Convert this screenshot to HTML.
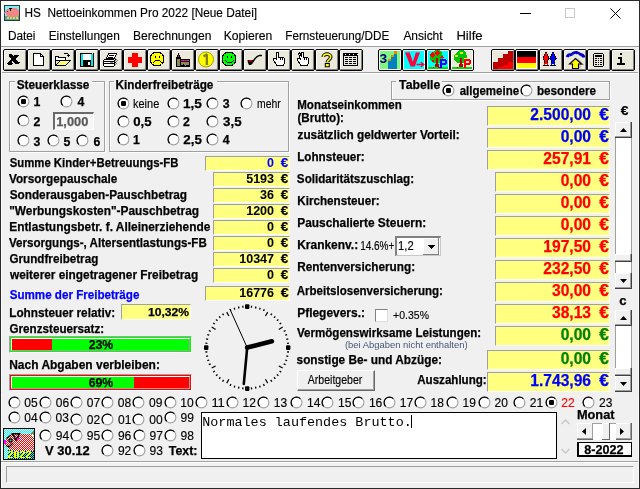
<!DOCTYPE html><html><head><meta charset="utf-8"><style>
html,body{margin:0;padding:0;}
body{width:640px;height:489px;position:relative;overflow:hidden;background:#f0f0f0;font-family:"Liberation Sans",sans-serif;}
.t{position:absolute;white-space:nowrap;}
svg{display:block}
</style></head><body>
<div style="position:absolute;left:0px;top:0px;width:640px;height:46px;background:#fff"></div>
<div style="position:absolute;left:0px;top:46px;width:640px;height:1px;background:#a0a0a0"></div>
<div style="position:absolute;left:0px;top:0px;width:640px;height:1px;background:#2a2a2a"></div>
<div style="position:absolute;left:0px;top:0px;width:1px;height:489px;background:#2a2a2a"></div>
<div style="position:absolute;left:639px;top:0px;width:1px;height:489px;background:#2a2a2a"></div>
<div style="position:absolute;left:0px;top:488px;width:640px;height:1px;background:#2a2a2a"></div>
<svg style="position:absolute;left:4px;top:5px" width="16" height="16" viewBox="0 0 16 16" shape-rendering="crispEdges">
<rect x="0" y="0" width="16" height="16" fill="#1a4040"/><rect x="1" y="1" width="14" height="14" fill="#80f0f0"/>
<rect x="1" y="11" width="14" height="4" fill="#60a0a0"/>
<path d="M1 6 L3 4 L6 3 H12 L15 5 V10 L13 12 H5 L2 10 Z" fill="#f08888"/>
<rect x="5" y="3" width="3" height="1" fill="#000"/><rect x="6" y="4" width="1" height="2" fill="#000"/>
<rect x="3" y="6" width="1" height="1" fill="#206060"/>
<rect x="0" y="7" width="1" height="2" fill="#c040c0"/>
<rect x="3" y="12" width="2" height="2" fill="#e0e040"/><rect x="6" y="12" width="2" height="2" fill="#e0e040"/><rect x="9" y="12" width="2" height="2" fill="#e0e040"/><rect x="12" y="12" width="2" height="2" fill="#e0e040"/>
</svg>
<div style="position:absolute;left:520px;top:13px;width:11px;height:1px;background:#000"></div>
<div style="position:absolute;left:565px;top:8px;width:10px;height:10px;border:1px solid #c8c8c8;box-sizing:border-box"></div>
<svg style="position:absolute;left:610px;top:8px" width="11" height="11" viewBox="0 0 11 11"><path d="M0.5 0.5 L10.5 10.5 M10.5 0.5 L0.5 10.5" stroke="#000" stroke-width="1"/></svg>
<div style="position:absolute;left:1px;top:72px;width:638px;height:1px;background:#a0a0a0"></div>
<div style="position:absolute;left:1px;top:73px;width:638px;height:1px;background:#fff"></div>
<div style="position:absolute;left:1px;top:47px;width:1px;height:441px;background:#fff"></div>
<div style="position:absolute;left:638px;top:47px;width:1px;height:441px;background:#fafafa"></div>
<div style="position:absolute;left:3px;top:49px;width:24px;height:22px;box-sizing:border-box;border:1px solid #000;border-radius:2px;background:#ebe9dc;box-shadow:inset 1px 1px 0 #fff, inset -1px -1px 0 #808080;"><svg width="21" height="20" viewBox="0 0 21 20" shape-rendering="crispEdges"><rect x="5" y="4" width="3" height="1" fill="#000"/><rect x="5" y="5" width="4" height="1" fill="#000"/><rect x="10" y="5" width="5" height="1" fill="#000"/><rect x="5" y="6" width="9" height="1" fill="#000"/><rect x="6" y="7" width="7" height="1" fill="#000"/><rect x="7" y="8" width="5" height="1" fill="#000"/><rect x="7" y="9" width="5" height="1" fill="#000"/><rect x="6" y="10" width="7" height="1" fill="#000"/><rect x="5" y="11" width="3" height="1" fill="#000"/><rect x="9" y="11" width="5" height="1" fill="#000"/><rect x="4" y="12" width="4" height="1" fill="#000"/><rect x="10" y="12" width="6" height="1" fill="#000"/><rect x="3" y="13" width="6" height="1" fill="#000"/><rect x="11" y="13" width="4" height="1" fill="#000"/><rect x="4" y="14" width="4" height="1" fill="#000"/></svg></div>
<div style="position:absolute;left:27px;top:49px;width:24px;height:22px;box-sizing:border-box;border:1px solid #000;border-radius:2px;background:#ebe9dc;box-shadow:inset 1px 1px 0 #fff, inset -1px -1px 0 #808080;"><svg width="21" height="20" viewBox="0 0 21 20" shape-rendering="crispEdges"><path d="M5.5 3.5 H12.5 L15.5 6.5 V15.5 H5.5 Z" fill="#fff" stroke="#000"/><path d="M12.5 3.5 V6.5 H15.5" fill="none" stroke="#000"/></svg></div>
<div style="position:absolute;left:51px;top:49px;width:24px;height:22px;box-sizing:border-box;border:1px solid #000;border-radius:2px;background:#ebe9dc;box-shadow:inset 1px 1px 0 #fff, inset -1px -1px 0 #808080;"><svg width="21" height="20" viewBox="0 0 21 20" shape-rendering="crispEdges"><path d="M3.5 15.5 V6.5 H6.5 V7.5 H13.5 V10.5 H3.5" fill="#fff" stroke="#000"/><path d="M3.5 15.5 L8.5 10.5 H18.5 L13.5 15.5 Z" fill="#ffff70" stroke="#000"/><path d="M11.5 4.5 L12.5 3.5 H15.5 L16.5 4.5 V6.5" fill="none" stroke="#000"/><rect x="15" y="5" width="3" height="1" fill="#000"/><rect x="16" y="6" width="1" height="1" fill="#000"/></svg></div>
<div style="position:absolute;left:75px;top:49px;width:24px;height:22px;box-sizing:border-box;border:1px solid #000;border-radius:2px;background:#ebe9dc;box-shadow:inset 1px 1px 0 #fff, inset -1px -1px 0 #808080;"><svg width="21" height="20" viewBox="0 0 21 20" shape-rendering="crispEdges"><rect x="4" y="3" width="14" height="14" fill="#000"/><rect x="5" y="4" width="2" height="12" fill="#00e8e8"/><rect x="15" y="4" width="2" height="12" fill="#00e8e8"/><rect x="7" y="4" width="8" height="6" fill="#fff"/><rect x="16" y="3" width="1" height="1" fill="#fff"/><rect x="12" y="12" width="2" height="3" fill="#fff"/></svg></div>
<div style="position:absolute;left:99px;top:49px;width:24px;height:22px;box-sizing:border-box;border:1px solid #000;border-radius:2px;background:#ebe9dc;box-shadow:inset 1px 1px 0 #fff, inset -1px -1px 0 #808080;"><svg width="21" height="20" viewBox="0 0 21 20" shape-rendering="crispEdges"><path d="M8.5 3.5 H16.5 L14.5 8.5 H6.5 Z" fill="#fff" stroke="#000"/><rect x="9" y="5" width="5" height="1" fill="#000"/><rect x="8" y="7" width="5" height="1" fill="#000"/><path d="M4.5 9.5 H13.5 L14.5 10.5 V15.5 L13.5 16.5 H4.5 L3.5 15.5 V10.5 Z" fill="#fff" stroke="#000"/><rect x="4" y="11" width="10" height="1" fill="#000"/><rect x="4" y="13" width="10" height="1" fill="#000"/><rect x="10" y="12" width="3" height="1" fill="#888"/><rect x="15" y="8" width="1" height="1" fill="#777"/><rect x="16" y="9" width="1" height="1" fill="#777"/><rect x="15" y="10" width="1" height="1" fill="#777"/><rect x="17" y="10" width="1" height="1" fill="#777"/><rect x="16" y="11" width="1" height="1" fill="#777"/><rect x="16" y="13" width="1" height="1" fill="#777"/><rect x="15" y="14" width="1" height="1" fill="#777"/><rect x="15" y="9" width="1" height="1" fill="#000"/><rect x="15" y="12" width="1" height="1" fill="#000"/></svg></div>
<div style="position:absolute;left:123px;top:49px;width:24px;height:22px;box-sizing:border-box;border:1px solid #000;border-radius:2px;background:#ebe9dc;box-shadow:inset 1px 1px 0 #fff, inset -1px -1px 0 #808080;"><svg width="21" height="20" viewBox="0 0 21 20" shape-rendering="crispEdges"><rect x="8" y="3" width="6" height="14" fill="#f00"/><rect x="4" y="7" width="14" height="6" fill="#f00"/></svg></div>
<div style="position:absolute;left:147px;top:49px;width:24px;height:22px;box-sizing:border-box;border:1px solid #000;border-radius:2px;background:#ebe9dc;box-shadow:inset 1px 1px 0 #fff, inset -1px -1px 0 #808080;"><svg width="21" height="20" viewBox="0 0 21 20" shape-rendering="crispEdges"><path d="M6.5 2.5 H11.5 L13.5 3.5 L14.5 4.5 L15.5 6.5 V11.5 L14.5 13.5 L13.5 14.5 L11.5 15.5 H6.5 L4.5 14.5 L3.5 13.5 L2.5 11.5 V6.5 L3.5 4.5 L4.5 3.5 Z" fill="#ff0" stroke="#000"/><rect x="7" y="6" width="1" height="2" fill="#000"/><rect x="11" y="6" width="1" height="2" fill="#000"/><rect x="7" y="10" width="5" height="1" fill="#000"/><rect x="6" y="11" width="1" height="1" fill="#000"/><rect x="12" y="11" width="1" height="1" fill="#000"/><rect x="5" y="12" width="1" height="1" fill="#000"/><rect x="13" y="12" width="1" height="1" fill="#000"/></svg></div>
<div style="position:absolute;left:171px;top:49px;width:24px;height:22px;box-sizing:border-box;border:1px solid #000;border-radius:2px;background:#ebe9dc;box-shadow:inset 1px 1px 0 #fff, inset -1px -1px 0 #808080;"><svg width="21" height="20" viewBox="0 0 21 20" shape-rendering="crispEdges"><rect x="6" y="3" width="1" height="2" fill="#000"/><rect x="5" y="5" width="3" height="3" fill="#000"/><rect x="6" y="5" width="1" height="1" fill="#f00"/><rect x="6" y="6" width="1" height="2" fill="#f0f"/><rect x="4" y="7" width="5" height="10" fill="#000"/><rect x="5" y="9" width="3" height="7" fill="#8a8a50"/><rect x="8" y="9" width="10" height="8" fill="#000"/><rect x="9" y="10" width="8" height="1" fill="#f0f"/><rect x="9" y="10" width="1" height="1" fill="#f00"/><rect x="12" y="10" width="1" height="1" fill="#f00"/><rect x="14" y="10" width="1" height="1" fill="#f00"/><rect x="9" y="12" width="8" height="3" fill="#8a8a50"/><rect x="11" y="14" width="1" height="2" fill="#000"/><rect x="13" y="15" width="1" height="1" fill="#8a8a50"/></svg></div>
<div style="position:absolute;left:195px;top:49px;width:24px;height:22px;box-sizing:border-box;border:1px solid #000;border-radius:2px;background:#ebe9dc;box-shadow:inset 1px 1px 0 #fff, inset -1px -1px 0 #808080;"><svg width="21" height="20" viewBox="0 0 21 20"><circle cx="10" cy="9.5" r="7.5" fill="#ff0" stroke="#a0a000"/><path d="M7.5 6.5 L10.8 4.3 V15" fill="none" stroke="#808000" stroke-width="2.3" stroke-linejoin="bevel"/></svg></div>
<div style="position:absolute;left:219px;top:49px;width:24px;height:22px;box-sizing:border-box;border:1px solid #000;border-radius:2px;background:#ebe9dc;box-shadow:inset 1px 1px 0 #fff, inset -1px -1px 0 #808080;"><svg width="21" height="20" viewBox="0 0 21 20" shape-rendering="crispEdges"><path d="M6.5 2.5 H11.5 L13.5 3.5 L14.5 4.5 L15.5 6.5 V11.5 L14.5 13.5 L13.5 14.5 L11.5 15.5 H6.5 L4.5 14.5 L3.5 13.5 L2.5 11.5 V6.5 L3.5 4.5 L4.5 3.5 Z" fill="#0f0" stroke="#000"/><rect x="7" y="6" width="1" height="2" fill="#000"/><rect x="11" y="6" width="1" height="2" fill="#000"/><rect x="5" y="10" width="1" height="1" fill="#000"/><rect x="13" y="10" width="1" height="1" fill="#000"/><rect x="6" y="11" width="1" height="1" fill="#000"/><rect x="12" y="11" width="1" height="1" fill="#000"/><rect x="7" y="12" width="5" height="1" fill="#000"/></svg></div>
<div style="position:absolute;left:243px;top:49px;width:24px;height:22px;box-sizing:border-box;border:1px solid #000;border-radius:2px;background:#ebe9dc;box-shadow:inset 1px 1px 0 #fff, inset -1px -1px 0 #808080;"><svg width="21" height="20" viewBox="0 0 21 20"><path d="M3.5 10 H9 L8.5 13.5 L7 15 H5 L4 13 Z" fill="#000"/><rect x="5" y="10.3" width="3" height="1.3" fill="#f00"/><path d="M8.5 12.5 Q12 6 15.5 5.5 H18" fill="none" stroke="#000" stroke-width="1.4"/></svg></div>
<div style="position:absolute;left:267px;top:49px;width:24px;height:22px;box-sizing:border-box;border:1px solid #000;border-radius:2px;background:#ebe9dc;box-shadow:inset 1px 1px 0 #fff, inset -1px -1px 0 #808080;"><svg width="21" height="20" viewBox="0 0 21 20" shape-rendering="crispEdges"><path d="M8.5 9.5 V2.5 H10.5 V7.5 H15.5 L16.5 8.5 V13.5 L15.5 14.5 V15.5 H8.5 V14.5 L5.5 10.5 V8.5 H7.5 Z" fill="#fff" stroke="#000"/><rect x="12" y="8" width="1" height="2" fill="#000"/><rect x="14" y="8" width="1" height="2" fill="#000"/></svg></div>
<div style="position:absolute;left:291px;top:49px;width:24px;height:22px;box-sizing:border-box;border:1px solid #000;border-radius:2px;background:#ebe9dc;box-shadow:inset 1px 1px 0 #fff, inset -1px -1px 0 #808080;"><svg width="21" height="20" viewBox="0 0 21 20" shape-rendering="crispEdges"><path d="M8.5 9.5 L6.5 3.5 L7.5 2.5 L9.5 6.5 V2.5 H11.5 V7.5 H15.5 L16.5 8.5 V13.5 L15.5 14.5 V15.5 H8.5 V14.5 L5.5 10.5 V8.5 H7.5 Z" fill="#fff" stroke="#000"/><rect x="12" y="8" width="1" height="2" fill="#000"/><rect x="14" y="8" width="1" height="2" fill="#000"/></svg></div>
<div style="position:absolute;left:315px;top:49px;width:24px;height:22px;box-sizing:border-box;border:1px solid #000;border-radius:2px;background:#ebe9dc;box-shadow:inset 1px 1px 0 #fff, inset -1px -1px 0 #808080;"><svg width="21" height="20" viewBox="0 0 21 20"><g transform="translate(1.5,0)"><path d="M5.8 7 C5.8 3.2 13.2 3.2 13.2 7 C13.2 9.8 9.8 9.8 9.8 12.3" fill="none" stroke="#000" stroke-width="3.6"/><path d="M5.8 7 C5.8 3.2 13.2 3.2 13.2 7 C13.2 9.8 9.8 9.8 9.8 12.3" fill="none" stroke="#ff0" stroke-width="1.6"/><rect x="7.8" y="13.5" width="4" height="3.3" fill="#ff0" stroke="#000"/></g></svg></div>
<div style="position:absolute;left:339px;top:49px;width:24px;height:22px;box-sizing:border-box;border:1px solid #000;border-radius:2px;background:#ebe9dc;box-shadow:inset 1px 1px 0 #fff, inset -1px -1px 0 #808080;"><svg width="21" height="20" viewBox="0 0 21 20" shape-rendering="crispEdges"><rect x="3" y="3" width="15" height="13" fill="#000"/><rect x="4" y="6" width="13" height="9" fill="#ebe9dc"/><rect x="5" y="7" width="3" height="1" fill="#000"/><rect x="5" y="9" width="3" height="1" fill="#000"/><rect x="5" y="11" width="3" height="1" fill="#000"/><rect x="5" y="13" width="3" height="1" fill="#000"/><rect x="9" y="7" width="3" height="1" fill="#000"/><rect x="9" y="9" width="3" height="1" fill="#000"/><rect x="9" y="11" width="3" height="1" fill="#000"/><rect x="9" y="13" width="3" height="1" fill="#000"/><rect x="13" y="7" width="3" height="1" fill="#000"/><rect x="13" y="9" width="3" height="1" fill="#000"/><rect x="13" y="11" width="3" height="1" fill="#000"/><rect x="13" y="13" width="3" height="1" fill="#000"/><rect x="5" y="4" width="1" height="1" fill="#fff"/><rect x="9" y="4" width="1" height="1" fill="#fff"/><rect x="13" y="4" width="1" height="1" fill="#fff"/><rect x="17" y="4" width="1" height="1" fill="#fff"/></svg></div>
<div style="position:absolute;left:378px;top:49px;width:24px;height:22px;box-sizing:border-box;border:1px solid #000;border-radius:2px;background:#ebe9dc;box-shadow:inset 1px 1px 0 #fff, inset -1px -1px 0 #fff;overflow:hidden"><div style="position:absolute;left:1px;top:1px;width:20px;height:18px;background:#80f880"></div><div style="position:absolute;left:0;top:0"><svg width="22" height="20" viewBox="0 0 22 20" shape-rendering="crispEdges"><text x="0.6" y="12.8" font-family="Liberation Sans" font-weight="bold" font-size="13.5" fill="#000080" shape-rendering="auto">3</text><rect x="9" y="11" width="3" height="8" fill="#0080c0"/><rect x="12" y="7" width="3" height="12" fill="#0080c0"/><rect x="15" y="4" width="3" height="15" fill="#0080c0"/><rect x="9" y="9" width="3" height="2" fill="#ff8000"/><rect x="12" y="5" width="3" height="2" fill="#ff8000"/><rect x="15" y="1" width="3" height="3" fill="#ff8000"/></svg></div></div>
<div style="position:absolute;left:402px;top:49px;width:24px;height:22px;box-sizing:border-box;border:1px solid #000;border-radius:2px;background:#ebe9dc;box-shadow:inset 1px 1px 0 #fff, inset -1px -1px 0 #fff;overflow:hidden"><div style="position:absolute;left:1px;top:1px;width:20px;height:18px;background:#00ffff"></div><div style="position:absolute;left:0;top:0"><svg width="22" height="20" viewBox="0 0 22 20"><path d="M2 2.5 H6.8 L9.8 12 L12.8 2.5 H17 L11.8 16.6 H7.6 Z" fill="#ff0040"/><path d="M13.5 14.5 H20.5 M17.8 12.3 L20.8 14.5 L17.8 16.8" fill="none" stroke="#ff0040" stroke-width="1.4"/></svg></div></div>
<div style="position:absolute;left:426px;top:49px;width:24px;height:22px;box-sizing:border-box;border:1px solid #000;border-radius:2px;background:#ebe9dc;box-shadow:inset 1px 1px 0 #fff, inset -1px -1px 0 #fff;overflow:hidden"><div style="position:absolute;left:1px;top:1px;width:20px;height:18px;background:#00ffff"></div><div style="position:absolute;left:0;top:0"><svg width="22" height="20" viewBox="0 0 22 20" shape-rendering="crispEdges"><rect x="1" y="17" width="20" height="2" fill="#00e000"/><path d="M3 6 L6 2 L9 0 H12 L15 3 L16 6 V10 L14 13 H6 L3 10 Z" fill="#00c800"/><path d="M2 5 L5 2 L8 5 L5 8 Z" fill="#f00"/><path d="M7 3 L10 0 L13 3 L10 6 Z" fill="#f00"/><path d="M13 8 L15 5 L17 8 Z" fill="#f00"/><rect x="5" y="10" width="2" height="2" fill="#f00"/><rect x="9" y="8" width="2" height="9" fill="#c00000"/><rect x="8" y="14" width="4" height="3" fill="#c00000"/><rect x="6" y="17" width="1" height="1" fill="#c00000"/><rect x="11" y="17" width="2" height="1" fill="#c00000"/><rect x="13" y="9" width="2" height="9" fill="#0000ff"/><rect x="13" y="9" width="6" height="2" fill="#0000ff"/><rect x="18" y="10" width="2" height="4" fill="#0000ff"/><rect x="13" y="13" width="6" height="2" fill="#0000ff"/></svg></div></div>
<div style="position:absolute;left:450px;top:49px;width:24px;height:22px;box-sizing:border-box;border:1px solid #000;border-radius:2px;background:#ebe9dc;box-shadow:inset 1px 1px 0 #fff, inset -1px -1px 0 #fff;overflow:hidden"><div style="position:absolute;left:1px;top:1px;width:20px;height:18px;background:#ebe9dc"></div><div style="position:absolute;left:0;top:0"><svg width="22" height="20" viewBox="0 0 22 20" shape-rendering="crispEdges"><rect x="1" y="17" width="20" height="2" fill="#00e000"/><path d="M3 6 L6 2 L9 0 H12 L15 3 L16 6 V10 L14 13 H6 L3 10 Z" fill="#00c800"/><rect x="4" y="5" width="3" height="2" fill="#ff0"/><rect x="9" y="2" width="3" height="2" fill="#ff0"/><rect x="13" y="8" width="3" height="2" fill="#ff0"/><rect x="9" y="8" width="2" height="9" fill="#c00000"/><rect x="8" y="14" width="4" height="3" fill="#c00000"/><rect x="6" y="17" width="1" height="1" fill="#c00000"/><rect x="13" y="9" width="2" height="9" fill="#ff0000"/><rect x="13" y="9" width="6" height="2" fill="#ff0000"/><rect x="18" y="10" width="2" height="4" fill="#ff0000"/><rect x="13" y="13" width="6" height="2" fill="#ff0000"/></svg></div></div>
<div style="position:absolute;left:491px;top:49px;width:24px;height:22px;box-sizing:border-box;border:1px solid #000;border-radius:2px;background:#ebe9dc;box-shadow:inset 1px 1px 0 #fff, inset -1px -1px 0 #808080;overflow:hidden"><div style="position:absolute;left:1px;top:1px;width:20px;height:18px;background:#ebe9dc"></div><div style="position:absolute;left:0;top:0"><svg width="22" height="20" viewBox="0 0 22 20" shape-rendering="crispEdges"><path d="M1 19 V12 H6 V8 H11 V4 H16 V1 H21 V19 Z" fill="#c00000"/><path d="M6 19 V17 H11 V15 H16 V12 H21 V19 Z" fill="#ff0000"/></svg></div></div>
<div style="position:absolute;left:515px;top:49px;width:24px;height:22px;box-sizing:border-box;border:1px solid #000;border-radius:2px;background:#ebe9dc;box-shadow:inset 1px 1px 0 #fff, inset -1px -1px 0 #808080;overflow:hidden"><div style="position:absolute;left:1px;top:1px;width:20px;height:18px;background:#ffffff"></div><div style="position:absolute;left:0;top:0"><svg width="22" height="20" viewBox="0 0 22 20" shape-rendering="crispEdges"><rect x="1" y="1" width="19" height="6" fill="#000"/><rect x="1" y="7" width="19" height="6" fill="#f00"/><rect x="1" y="13" width="19" height="5" fill="#ff0"/></svg></div></div>
<div style="position:absolute;left:539px;top:49px;width:24px;height:22px;box-sizing:border-box;border:1px solid #000;border-radius:2px;background:#ebe9dc;box-shadow:inset 1px 1px 0 #fff, inset -1px -1px 0 #808080;overflow:hidden"><div style="position:absolute;left:1px;top:1px;width:20px;height:18px;background:#ebe9dc"></div><div style="position:absolute;left:0;top:0"><svg width="22" height="20" viewBox="0 0 22 20" shape-rendering="crispEdges"><rect x="5" y="3" width="2" height="1" fill="#f00"/><rect x="5" y="2" width="2" height="1" fill="#000"/><rect x="4" y="4" width="4" height="1" fill="#000"/><rect x="5" y="4" width="2" height="1" fill="#f00"/><rect x="5" y="5" width="2" height="1" fill="#f00"/><rect x="4" y="5" width="1" height="1" fill="#000"/><rect x="7" y="5" width="1" height="1" fill="#000"/><rect x="3" y="6" width="6" height="4" fill="#000"/><rect x="4" y="6" width="4" height="4" fill="#f00"/><rect x="3" y="8" width="1" height="1" fill="#f00"/><rect x="4" y="10" width="4" height="4" fill="#000"/><rect x="5" y="10" width="2" height="4" fill="#f00"/><rect x="4" y="13" width="1" height="2" fill="#f00"/><rect x="7" y="13" width="1" height="2" fill="#f00"/><rect x="3" y="15" width="6" height="1" fill="#000"/><rect x="12" y="3" width="2" height="1" fill="#00f"/><rect x="12" y="2" width="2" height="1" fill="#000"/><rect x="11" y="4" width="4" height="1" fill="#000"/><rect x="12" y="4" width="2" height="1" fill="#00f"/><rect x="12" y="5" width="2" height="1" fill="#00f"/><rect x="11" y="5" width="1" height="1" fill="#000"/><rect x="14" y="5" width="1" height="1" fill="#000"/><rect x="10" y="6" width="6" height="4" fill="#000"/><rect x="11" y="6" width="4" height="4" fill="#00f"/><rect x="10" y="8" width="1" height="1" fill="#00f"/><rect x="11" y="10" width="4" height="4" fill="#000"/><rect x="12" y="10" width="2" height="4" fill="#00f"/><rect x="11" y="13" width="1" height="2" fill="#00f"/><rect x="14" y="13" width="1" height="2" fill="#00f"/><rect x="10" y="15" width="6" height="1" fill="#000"/><rect x="9" y="8" width="2" height="1" fill="#00f"/><rect x="16" y="8" width="1" height="1" fill="#00f"/></svg></div></div>
<div style="position:absolute;left:563px;top:49px;width:24px;height:22px;box-sizing:border-box;border:1px solid #000;border-radius:2px;background:#ebe9dc;box-shadow:inset 1px 1px 0 #fff, inset -1px -1px 0 #808080;overflow:hidden"><div style="position:absolute;left:1px;top:1px;width:20px;height:18px;background:#ebe9dc"></div><div style="position:absolute;left:0;top:0"><svg width="22" height="20" viewBox="0 0 22 20"><path d="M3 7 Q4 4.5 7.5 4.5 Q9.5 2 13 2.5 Q15 3 16.5 4.5 Q19.5 5 20 7.5" fill="none" stroke="#0000c8" stroke-width="2.8"/><path d="M5 6 Q8 4.5 10 4 M12 4.5 Q15 4 17 6" fill="none" stroke="#8080ff" stroke-width="0.8" stroke-dasharray="1 1.5"/><path d="M13.5 9 L19.5 14.5 H16 V18" fill="none" stroke="#999" stroke-width="1"/><path d="M11.5 8.5 L17.5 14 H14.5 V18.5 H8.5 V14 H5.5 Z" fill="#ff0" stroke="#000" stroke-width="1.1"/></svg></div></div>
<div style="position:absolute;left:587px;top:49px;width:24px;height:22px;box-sizing:border-box;border:1px solid #000;border-radius:2px;background:#ebe9dc;box-shadow:inset 1px 1px 0 #fff, inset -1px -1px 0 #808080;overflow:hidden"><div style="position:absolute;left:1px;top:1px;width:20px;height:18px;background:#ebe9dc"></div><div style="position:absolute;left:0;top:0"><svg width="22" height="20" viewBox="0 0 22 20" shape-rendering="crispEdges"><path d="M6.5 3.5 H14.5 L15.5 4.5 V15.5 L14.5 16.5 H6.5 L5.5 15.5 V4.5 Z" fill="#ebe9dc" stroke="#000"/><rect x="7" y="5" width="7" height="2" fill="#000"/><rect x="7" y="8" width="7" height="1" fill="#000"/><rect x="9" y="8" width="1" height="1" fill="#ebe9dc"/><rect x="11" y="8" width="1" height="1" fill="#ebe9dc"/><rect x="7" y="10" width="7" height="1" fill="#000"/><rect x="9" y="10" width="1" height="1" fill="#ebe9dc"/><rect x="11" y="10" width="1" height="1" fill="#ebe9dc"/><rect x="7" y="12" width="7" height="1" fill="#000"/><rect x="9" y="12" width="1" height="1" fill="#ebe9dc"/><rect x="11" y="12" width="1" height="1" fill="#ebe9dc"/><rect x="7" y="14" width="7" height="1" fill="#000"/><rect x="9" y="14" width="1" height="1" fill="#ebe9dc"/><rect x="11" y="14" width="1" height="1" fill="#ebe9dc"/></svg></div></div>
<div style="position:absolute;left:611px;top:49px;width:24px;height:22px;box-sizing:border-box;border:1px solid #000;border-radius:2px;background:#ebe9dc;box-shadow:inset 1px 1px 0 #fff, inset -1px -1px 0 #808080;overflow:hidden"><div style="position:absolute;left:1px;top:1px;width:20px;height:18px;background:#ebe9dc"></div><div style="position:absolute;left:0;top:0"><svg width="22" height="20" viewBox="0 0 22 20" shape-rendering="crispEdges"><rect x="8" y="3" width="2" height="2" fill="#000"/><rect x="6" y="7" width="4" height="2" fill="#000"/><rect x="8" y="7" width="2" height="7" fill="#000"/><rect x="5" y="13" width="8" height="2" fill="#000"/></svg></div></div>
<div style="position:absolute;left:10px;top:82px;width:95px;height:70px;border:1px solid #fff;box-sizing:border-box;width:96px;height:71px"></div>
<div style="position:absolute;left:9px;top:81px;width:95px;height:70px;border:1px solid #a0a0a0;box-sizing:border-box;width:96px;height:71px"></div>
<div style="position:absolute;left:15px;top:80px;width:77px;height:4px;background:#f0f0f0"></div>
<svg style="position:absolute;left:17px;top:95px" width="13" height="13" viewBox="0 0 13 13"><circle cx="6.5" cy="6.5" r="5.4" fill="#fff" stroke="#a0a0a0" stroke-width="1.1"/><path d="M2.68 10.32 A5.4 5.4 0 0 1 10.32 2.68" fill="none" stroke="#000" stroke-width="1.25"/><rect x="4" y="4" width="5" height="5" rx="1.2" fill="#000"/></svg>
<svg style="position:absolute;left:60px;top:95px" width="13" height="13" viewBox="0 0 13 13"><circle cx="6.5" cy="6.5" r="5.4" fill="#fff" stroke="#a0a0a0" stroke-width="1.1"/><path d="M2.68 10.32 A5.4 5.4 0 0 1 10.32 2.68" fill="none" stroke="#000" stroke-width="1.25"/></svg>
<svg style="position:absolute;left:17px;top:114px" width="13" height="13" viewBox="0 0 13 13"><circle cx="6.5" cy="6.5" r="5.4" fill="#fff" stroke="#a0a0a0" stroke-width="1.1"/><path d="M2.68 10.32 A5.4 5.4 0 0 1 10.32 2.68" fill="none" stroke="#000" stroke-width="1.25"/></svg>
<div style="position:absolute;left:53px;top:112px;width:41px;height:18px;background:#f7f7f7;border-top:2px solid #6a6a6a;border-left:2px solid #6a6a6a;border-right:1px solid #fff;border-bottom:1px solid #fff;box-sizing:border-box"></div>
<svg style="position:absolute;left:17px;top:134px" width="13" height="13" viewBox="0 0 13 13"><circle cx="6.5" cy="6.5" r="5.4" fill="#fff" stroke="#a0a0a0" stroke-width="1.1"/><path d="M2.68 10.32 A5.4 5.4 0 0 1 10.32 2.68" fill="none" stroke="#000" stroke-width="1.25"/></svg>
<svg style="position:absolute;left:47px;top:134px" width="13" height="13" viewBox="0 0 13 13"><circle cx="6.5" cy="6.5" r="5.4" fill="#fff" stroke="#a0a0a0" stroke-width="1.1"/><path d="M2.68 10.32 A5.4 5.4 0 0 1 10.32 2.68" fill="none" stroke="#000" stroke-width="1.25"/></svg>
<svg style="position:absolute;left:76px;top:134px" width="13" height="13" viewBox="0 0 13 13"><circle cx="6.5" cy="6.5" r="5.4" fill="#fff" stroke="#a0a0a0" stroke-width="1.1"/><path d="M2.68 10.32 A5.4 5.4 0 0 1 10.32 2.68" fill="none" stroke="#000" stroke-width="1.25"/></svg>
<div style="position:absolute;left:110px;top:82px;width:179px;height:70px;border:1px solid #fff;box-sizing:border-box;width:180px;height:71px"></div>
<div style="position:absolute;left:109px;top:81px;width:179px;height:70px;border:1px solid #a0a0a0;box-sizing:border-box;width:180px;height:71px"></div>
<div style="position:absolute;left:114px;top:80px;width:103px;height:4px;background:#f0f0f0"></div>
<svg style="position:absolute;left:117px;top:97px" width="13" height="13" viewBox="0 0 13 13"><circle cx="6.5" cy="6.5" r="5.4" fill="#fff" stroke="#a0a0a0" stroke-width="1.1"/><path d="M2.68 10.32 A5.4 5.4 0 0 1 10.32 2.68" fill="none" stroke="#000" stroke-width="1.25"/><rect x="4" y="4" width="5" height="5" rx="1.2" fill="#000"/></svg>
<svg style="position:absolute;left:167px;top:97px" width="13" height="13" viewBox="0 0 13 13"><circle cx="6.5" cy="6.5" r="5.4" fill="#fff" stroke="#a0a0a0" stroke-width="1.1"/><path d="M2.68 10.32 A5.4 5.4 0 0 1 10.32 2.68" fill="none" stroke="#000" stroke-width="1.25"/></svg>
<svg style="position:absolute;left:206px;top:97px" width="13" height="13" viewBox="0 0 13 13"><circle cx="6.5" cy="6.5" r="5.4" fill="#fff" stroke="#a0a0a0" stroke-width="1.1"/><path d="M2.68 10.32 A5.4 5.4 0 0 1 10.32 2.68" fill="none" stroke="#000" stroke-width="1.25"/></svg>
<svg style="position:absolute;left:240px;top:97px" width="13" height="13" viewBox="0 0 13 13"><circle cx="6.5" cy="6.5" r="5.4" fill="#fff" stroke="#a0a0a0" stroke-width="1.1"/><path d="M2.68 10.32 A5.4 5.4 0 0 1 10.32 2.68" fill="none" stroke="#000" stroke-width="1.25"/></svg>
<svg style="position:absolute;left:117px;top:115px" width="13" height="13" viewBox="0 0 13 13"><circle cx="6.5" cy="6.5" r="5.4" fill="#fff" stroke="#a0a0a0" stroke-width="1.1"/><path d="M2.68 10.32 A5.4 5.4 0 0 1 10.32 2.68" fill="none" stroke="#000" stroke-width="1.25"/></svg>
<svg style="position:absolute;left:167px;top:115px" width="13" height="13" viewBox="0 0 13 13"><circle cx="6.5" cy="6.5" r="5.4" fill="#fff" stroke="#a0a0a0" stroke-width="1.1"/><path d="M2.68 10.32 A5.4 5.4 0 0 1 10.32 2.68" fill="none" stroke="#000" stroke-width="1.25"/></svg>
<svg style="position:absolute;left:206px;top:115px" width="13" height="13" viewBox="0 0 13 13"><circle cx="6.5" cy="6.5" r="5.4" fill="#fff" stroke="#a0a0a0" stroke-width="1.1"/><path d="M2.68 10.32 A5.4 5.4 0 0 1 10.32 2.68" fill="none" stroke="#000" stroke-width="1.25"/></svg>
<svg style="position:absolute;left:117px;top:133px" width="13" height="13" viewBox="0 0 13 13"><circle cx="6.5" cy="6.5" r="5.4" fill="#fff" stroke="#a0a0a0" stroke-width="1.1"/><path d="M2.68 10.32 A5.4 5.4 0 0 1 10.32 2.68" fill="none" stroke="#000" stroke-width="1.25"/></svg>
<svg style="position:absolute;left:167px;top:133px" width="13" height="13" viewBox="0 0 13 13"><circle cx="6.5" cy="6.5" r="5.4" fill="#fff" stroke="#a0a0a0" stroke-width="1.1"/><path d="M2.68 10.32 A5.4 5.4 0 0 1 10.32 2.68" fill="none" stroke="#000" stroke-width="1.25"/></svg>
<svg style="position:absolute;left:206px;top:133px" width="13" height="13" viewBox="0 0 13 13"><circle cx="6.5" cy="6.5" r="5.4" fill="#fff" stroke="#a0a0a0" stroke-width="1.1"/><path d="M2.68 10.32 A5.4 5.4 0 0 1 10.32 2.68" fill="none" stroke="#000" stroke-width="1.25"/></svg>
<div style="position:absolute;left:205px;top:156px;width:85px;height:15px;background:#ffff80;border-top:1px solid #a0a0a0;border-left:1px solid #a0a0a0;border-right:1px solid #fff;border-bottom:1px solid #fff;box-sizing:border-box"></div>
<div style="position:absolute;left:213px;top:172px;width:77px;height:15px;background:#ffff80;border-top:1px solid #a0a0a0;border-left:1px solid #a0a0a0;border-right:1px solid #fff;border-bottom:1px solid #fff;box-sizing:border-box"></div>
<div style="position:absolute;left:213px;top:188px;width:77px;height:15px;background:#ffff80;border-top:1px solid #a0a0a0;border-left:1px solid #a0a0a0;border-right:1px solid #fff;border-bottom:1px solid #fff;box-sizing:border-box"></div>
<div style="position:absolute;left:213px;top:204px;width:77px;height:15px;background:#ffff80;border-top:1px solid #a0a0a0;border-left:1px solid #a0a0a0;border-right:1px solid #fff;border-bottom:1px solid #fff;box-sizing:border-box"></div>
<div style="position:absolute;left:213px;top:220px;width:77px;height:15px;background:#ffff80;border-top:1px solid #a0a0a0;border-left:1px solid #a0a0a0;border-right:1px solid #fff;border-bottom:1px solid #fff;box-sizing:border-box"></div>
<div style="position:absolute;left:213px;top:236px;width:77px;height:15px;background:#ffff80;border-top:1px solid #a0a0a0;border-left:1px solid #a0a0a0;border-right:1px solid #fff;border-bottom:1px solid #fff;box-sizing:border-box"></div>
<div style="position:absolute;left:213px;top:252px;width:77px;height:15px;background:#ffff80;border-top:1px solid #a0a0a0;border-left:1px solid #a0a0a0;border-right:1px solid #fff;border-bottom:1px solid #fff;box-sizing:border-box"></div>
<div style="position:absolute;left:213px;top:268px;width:77px;height:15px;background:#ffff80;border-top:1px solid #a0a0a0;border-left:1px solid #a0a0a0;border-right:1px solid #fff;border-bottom:1px solid #fff;box-sizing:border-box"></div>
<div style="position:absolute;left:205px;top:286px;width:85px;height:15px;background:#ffff80;border-top:1px solid #a0a0a0;border-left:1px solid #a0a0a0;border-right:1px solid #fff;border-bottom:1px solid #fff;box-sizing:border-box"></div>
<div style="position:absolute;left:121px;top:304px;width:70px;height:16px;background:#ffff80;border-top:1px solid #a0a0a0;border-left:1px solid #a0a0a0;border-right:1px solid #fff;border-bottom:1px solid #fff;box-sizing:border-box"></div>
<div style="position:absolute;left:9px;top:336px;width:183px;height:17px;border-top:1px solid #a0a0a0;border-left:1px solid #a0a0a0;border-right:1px solid #fff;border-bottom:1px solid #fff;box-sizing:border-box"></div>
<div style="position:absolute;left:10px;top:337px;width:181px;height:15px;border:1px solid #00ff00;box-sizing:border-box"></div>
<div style="position:absolute;left:11px;top:338px;width:179px;height:13px;border-top:1px solid #fff;border-left:1px solid #fff;border-right:1px solid #a0a0a0;border-bottom:1px solid #a0a0a0;box-sizing:border-box"></div>
<div style="position:absolute;left:12px;top:339px;width:40px;height:11px;background:#ff0000"></div>
<div style="position:absolute;left:52px;top:339px;width:137px;height:11px;background:#00ff00"></div>
<div style="position:absolute;left:9px;top:374px;width:183px;height:17px;border-top:1px solid #a0a0a0;border-left:1px solid #a0a0a0;border-right:1px solid #fff;border-bottom:1px solid #fff;box-sizing:border-box"></div>
<div style="position:absolute;left:10px;top:375px;width:181px;height:15px;border:1px solid #ff0000;box-sizing:border-box"></div>
<div style="position:absolute;left:11px;top:376px;width:179px;height:13px;border-top:1px solid #fff;border-left:1px solid #fff;border-right:1px solid #a0a0a0;border-bottom:1px solid #a0a0a0;box-sizing:border-box"></div>
<div style="position:absolute;left:12px;top:377px;width:122px;height:11px;background:#00ff00"></div>
<div style="position:absolute;left:134px;top:377px;width:55px;height:11px;background:#ff0000"></div>
<svg style="position:absolute;left:0;top:0" width="640" height="489"><rect x="245.0" y="304.2" width="4.4" height="4.8" rx="1" fill="#000"/><line x1="251.4" y1="307.8" x2="251.6" y2="305.8" stroke="#000" stroke-width="1.3"/><line x1="255.5" y1="308.5" x2="255.9" y2="306.5" stroke="#000" stroke-width="1.3"/><line x1="259.6" y1="309.6" x2="260.2" y2="307.7" stroke="#000" stroke-width="1.3"/><line x1="263.5" y1="311.1" x2="264.3" y2="309.2" stroke="#000" stroke-width="1.3"/><line x1="265.4" y1="316.0" x2="267.7" y2="312.1" stroke="#000" stroke-width="1.2"/><line x1="270.7" y1="315.2" x2="271.9" y2="313.6" stroke="#000" stroke-width="1.3"/><line x1="274.0" y1="317.9" x2="275.3" y2="316.4" stroke="#000" stroke-width="1.3"/><line x1="276.9" y1="320.8" x2="278.4" y2="319.5" stroke="#000" stroke-width="1.3"/><line x1="279.6" y1="324.1" x2="281.2" y2="322.9" stroke="#000" stroke-width="1.3"/><line x1="278.8" y1="329.4" x2="282.7" y2="327.1" stroke="#000" stroke-width="1.2"/><line x1="283.7" y1="331.3" x2="285.6" y2="330.5" stroke="#000" stroke-width="1.3"/><line x1="285.2" y1="335.2" x2="287.1" y2="334.6" stroke="#000" stroke-width="1.3"/><line x1="286.3" y1="339.3" x2="288.3" y2="338.9" stroke="#000" stroke-width="1.3"/><line x1="287.0" y1="343.4" x2="289.0" y2="343.2" stroke="#000" stroke-width="1.3"/><rect x="286.0" y="345.2" width="4.4" height="4.8" rx="1" fill="#000"/><line x1="287.0" y1="351.8" x2="289.0" y2="352.0" stroke="#000" stroke-width="1.3"/><line x1="286.3" y1="355.9" x2="288.3" y2="356.3" stroke="#000" stroke-width="1.3"/><line x1="285.2" y1="360.0" x2="287.1" y2="360.6" stroke="#000" stroke-width="1.3"/><line x1="283.7" y1="363.9" x2="285.6" y2="364.7" stroke="#000" stroke-width="1.3"/><line x1="278.8" y1="365.9" x2="282.7" y2="368.1" stroke="#000" stroke-width="1.2"/><line x1="279.6" y1="371.1" x2="281.2" y2="372.3" stroke="#000" stroke-width="1.3"/><line x1="276.9" y1="374.4" x2="278.4" y2="375.7" stroke="#000" stroke-width="1.3"/><line x1="274.0" y1="377.3" x2="275.3" y2="378.8" stroke="#000" stroke-width="1.3"/><line x1="270.7" y1="380.0" x2="271.9" y2="381.6" stroke="#000" stroke-width="1.3"/><line x1="265.4" y1="379.2" x2="267.7" y2="383.1" stroke="#000" stroke-width="1.2"/><line x1="263.5" y1="384.1" x2="264.3" y2="386.0" stroke="#000" stroke-width="1.3"/><line x1="259.6" y1="385.6" x2="260.2" y2="387.5" stroke="#000" stroke-width="1.3"/><line x1="255.5" y1="386.7" x2="255.9" y2="388.7" stroke="#000" stroke-width="1.3"/><line x1="251.4" y1="387.4" x2="251.6" y2="389.4" stroke="#000" stroke-width="1.3"/><rect x="245.0" y="386.2" width="4.4" height="4.8" rx="1" fill="#000"/><line x1="243.0" y1="387.4" x2="242.8" y2="389.4" stroke="#000" stroke-width="1.3"/><line x1="238.9" y1="386.7" x2="238.5" y2="388.7" stroke="#000" stroke-width="1.3"/><line x1="234.8" y1="385.6" x2="234.2" y2="387.5" stroke="#000" stroke-width="1.3"/><line x1="230.9" y1="384.1" x2="230.1" y2="386.0" stroke="#000" stroke-width="1.3"/><line x1="228.9" y1="379.2" x2="226.7" y2="383.1" stroke="#000" stroke-width="1.2"/><line x1="223.7" y1="380.0" x2="222.5" y2="381.6" stroke="#000" stroke-width="1.3"/><line x1="220.4" y1="377.3" x2="219.1" y2="378.8" stroke="#000" stroke-width="1.3"/><line x1="217.5" y1="374.4" x2="216.0" y2="375.7" stroke="#000" stroke-width="1.3"/><line x1="214.8" y1="371.1" x2="213.2" y2="372.3" stroke="#000" stroke-width="1.3"/><line x1="215.6" y1="365.9" x2="211.7" y2="368.1" stroke="#000" stroke-width="1.2"/><line x1="210.7" y1="363.9" x2="208.8" y2="364.7" stroke="#000" stroke-width="1.3"/><line x1="209.2" y1="360.0" x2="207.3" y2="360.6" stroke="#000" stroke-width="1.3"/><line x1="208.1" y1="355.9" x2="206.1" y2="356.3" stroke="#000" stroke-width="1.3"/><line x1="207.4" y1="351.8" x2="205.4" y2="352.0" stroke="#000" stroke-width="1.3"/><rect x="204.0" y="345.2" width="4.4" height="4.8" rx="1" fill="#000"/><line x1="207.4" y1="343.4" x2="205.4" y2="343.2" stroke="#000" stroke-width="1.3"/><line x1="208.1" y1="339.3" x2="206.1" y2="338.9" stroke="#000" stroke-width="1.3"/><line x1="209.2" y1="335.2" x2="207.3" y2="334.6" stroke="#000" stroke-width="1.3"/><line x1="210.7" y1="331.3" x2="208.8" y2="330.5" stroke="#000" stroke-width="1.3"/><line x1="215.6" y1="329.4" x2="211.7" y2="327.1" stroke="#000" stroke-width="1.2"/><line x1="214.8" y1="324.1" x2="213.2" y2="322.9" stroke="#000" stroke-width="1.3"/><line x1="217.5" y1="320.8" x2="216.0" y2="319.5" stroke="#000" stroke-width="1.3"/><line x1="220.4" y1="317.9" x2="219.1" y2="316.4" stroke="#000" stroke-width="1.3"/><line x1="223.7" y1="315.2" x2="222.5" y2="313.6" stroke="#000" stroke-width="1.3"/><line x1="228.9" y1="316.0" x2="226.7" y2="312.1" stroke="#000" stroke-width="1.2"/><line x1="230.9" y1="311.1" x2="230.1" y2="309.2" stroke="#000" stroke-width="1.3"/><line x1="234.8" y1="309.6" x2="234.2" y2="307.7" stroke="#000" stroke-width="1.3"/><line x1="238.9" y1="308.5" x2="238.5" y2="306.5" stroke="#000" stroke-width="1.3"/><line x1="243.0" y1="307.8" x2="242.8" y2="305.8" stroke="#000" stroke-width="1.3"/><line x1="247.2" y1="347.6" x2="271.9" y2="341.3" stroke="#000" stroke-width="4.6" stroke-linecap="round"/><line x1="247.2" y1="347.6" x2="243.8" y2="383.9" stroke="#000" stroke-width="2.6" stroke-linecap="round"/><line x1="247.2" y1="347.6" x2="230.0" y2="309.3" stroke="#000" stroke-width="1" stroke-linecap="round"/></svg>
<div style="position:absolute;left:392px;top:82px;width:218px;height:18px;border:1px solid #fff;box-sizing:border-box;width:219px;height:19px"></div>
<div style="position:absolute;left:391px;top:81px;width:218px;height:18px;border:1px solid #a0a0a0;box-sizing:border-box;width:219px;height:19px"></div>
<div style="position:absolute;left:396px;top:78px;width:46px;height:8px;background:#f0f0f0"></div>
<div style="position:absolute;left:440px;top:83px;width:168px;height:15px;background:#f0f0f0"></div>
<svg style="position:absolute;left:442px;top:84px" width="13" height="13" viewBox="0 0 13 13"><circle cx="6.5" cy="6.5" r="5.4" fill="#fff" stroke="#a0a0a0" stroke-width="1.1"/><path d="M2.68 10.32 A5.4 5.4 0 0 1 10.32 2.68" fill="none" stroke="#000" stroke-width="1.25"/><rect x="4" y="4" width="5" height="5" rx="1.2" fill="#000"/></svg>
<svg style="position:absolute;left:520px;top:84px" width="13" height="13" viewBox="0 0 13 13"><circle cx="6.5" cy="6.5" r="5.4" fill="#fff" stroke="#a0a0a0" stroke-width="1.1"/><path d="M2.68 10.32 A5.4 5.4 0 0 1 10.32 2.68" fill="none" stroke="#000" stroke-width="1.25"/></svg>
<div style="position:absolute;left:487px;top:106px;width:123px;height:20px;background:#ffff80;border-top:1px solid #a0a0a0;border-left:1px solid #a0a0a0;border-right:1px solid #fff;border-bottom:1px solid #fff;box-sizing:border-box"></div>
<div style="position:absolute;left:487px;top:128px;width:123px;height:20px;background:#ffff80;border-top:1px solid #a0a0a0;border-left:1px solid #a0a0a0;border-right:1px solid #fff;border-bottom:1px solid #fff;box-sizing:border-box"></div>
<div style="position:absolute;left:487px;top:150px;width:123px;height:20px;background:#ffff80;border-top:1px solid #a0a0a0;border-left:1px solid #a0a0a0;border-right:1px solid #fff;border-bottom:1px solid #fff;box-sizing:border-box"></div>
<div style="position:absolute;left:495px;top:172px;width:115px;height:20px;background:#ffff80;border-top:1px solid #a0a0a0;border-left:1px solid #a0a0a0;border-right:1px solid #fff;border-bottom:1px solid #fff;box-sizing:border-box"></div>
<div style="position:absolute;left:495px;top:194px;width:115px;height:20px;background:#ffff80;border-top:1px solid #a0a0a0;border-left:1px solid #a0a0a0;border-right:1px solid #fff;border-bottom:1px solid #fff;box-sizing:border-box"></div>
<div style="position:absolute;left:495px;top:216px;width:115px;height:20px;background:#ffff80;border-top:1px solid #a0a0a0;border-left:1px solid #a0a0a0;border-right:1px solid #fff;border-bottom:1px solid #fff;box-sizing:border-box"></div>
<div style="position:absolute;left:495px;top:238px;width:115px;height:20px;background:#ffff80;border-top:1px solid #a0a0a0;border-left:1px solid #a0a0a0;border-right:1px solid #fff;border-bottom:1px solid #fff;box-sizing:border-box"></div>
<div style="position:absolute;left:495px;top:260px;width:115px;height:20px;background:#ffff80;border-top:1px solid #a0a0a0;border-left:1px solid #a0a0a0;border-right:1px solid #fff;border-bottom:1px solid #fff;box-sizing:border-box"></div>
<div style="position:absolute;left:495px;top:282px;width:115px;height:20px;background:#ffff80;border-top:1px solid #a0a0a0;border-left:1px solid #a0a0a0;border-right:1px solid #fff;border-bottom:1px solid #fff;box-sizing:border-box"></div>
<div style="position:absolute;left:495px;top:304px;width:115px;height:20px;background:#ffff80;border-top:1px solid #a0a0a0;border-left:1px solid #a0a0a0;border-right:1px solid #fff;border-bottom:1px solid #fff;box-sizing:border-box"></div>
<div style="position:absolute;left:495px;top:326px;width:115px;height:20px;background:#ffff80;border-top:1px solid #a0a0a0;border-left:1px solid #a0a0a0;border-right:1px solid #fff;border-bottom:1px solid #fff;box-sizing:border-box"></div>
<div style="position:absolute;left:487px;top:350px;width:123px;height:20px;background:#ffff80;border-top:1px solid #a0a0a0;border-left:1px solid #a0a0a0;border-right:1px solid #fff;border-bottom:1px solid #fff;box-sizing:border-box"></div>
<div style="position:absolute;left:487px;top:372px;width:123px;height:20px;background:#ffff80;border-top:1px solid #a0a0a0;border-left:1px solid #a0a0a0;border-right:1px solid #fff;border-bottom:1px solid #fff;box-sizing:border-box"></div>
<div style="position:absolute;left:395px;top:236px;width:46px;height:20px;background:#fff;border-top:2px solid #808080;border-left:2px solid #808080;border-right:1px solid #c8c8c8;border-bottom:1px solid #c8c8c8;box-sizing:border-box"></div>
<div style="position:absolute;left:423px;top:238px;width:16px;height:17px;background:#f0f0f0;border-right:1px solid #808080;border-bottom:1px solid #808080;box-sizing:border-box;box-shadow:inset 1px 1px 0 #fff"></div>
<svg style="position:absolute;left:428px;top:245px" width="8" height="5" viewBox="0 0 8 5" shape-rendering="crispEdges"><rect x="0" y="0" width="7" height="1" fill="#000"/><rect x="1" y="1" width="5" height="1" fill="#000"/><rect x="2" y="2" width="3" height="1" fill="#000"/><rect x="3" y="3" width="1" height="1" fill="#000"/></svg>
<div style="position:absolute;left:375px;top:309px;width:13px;height:13px;background:#fff;border-top:1px solid #808080;border-left:1px solid #808080;border-right:1px solid #dcdcdc;border-bottom:1px solid #dcdcdc;box-sizing:border-box"></div>
<div style="position:absolute;left:297px;top:370px;width:78px;height:21px;background:#f0f0f0;border-top:1px solid #fff;border-left:1px solid #fff;border-right:1px solid #696969;border-bottom:1px solid #696969;box-sizing:border-box;box-shadow:inset -1px -1px 0 #a0a0a0"></div>
<div style="position:absolute;left:615px;top:122px;width:17px;height:167px;background:#fff;border-left:1px solid #a0a0a0;border-right:1px solid #a0a0a0;box-sizing:border-box"></div>
<div style="position:absolute;left:615px;top:122px;width:17px;height:16px;background:#f0f0f0;border-right:1px solid #404040;border-bottom:1px solid #404040;box-sizing:border-box;box-shadow:inset -1px -1px 0 #a0a0a0, inset 1px 1px 0 #fff"></div>
<svg style="position:absolute;left:620px;top:128px" width="8" height="5" viewBox="0 0 8 5"><path d="M0 4 H7 L3.5 0 Z" fill="#000"/></svg>
<div style="position:absolute;left:615px;top:273px;width:17px;height:16px;background:#f0f0f0;border-right:1px solid #404040;border-bottom:1px solid #404040;box-sizing:border-box;box-shadow:inset -1px -1px 0 #a0a0a0, inset 1px 1px 0 #fff"></div>
<svg style="position:absolute;left:620px;top:279px" width="8" height="5" viewBox="0 0 8 5"><path d="M0 0 H7 L3.5 4 Z" fill="#000"/></svg>
<div style="position:absolute;left:615px;top:254px;width:17px;height:8px;background:#f0f0f0;border-right:1px solid #404040;border-bottom:1px solid #404040;box-sizing:border-box;box-shadow:inset -1px -1px 0 #a0a0a0, inset 1px 1px 0 #fff"></div>
<div style="position:absolute;left:615px;top:310px;width:17px;height:82px;background:#fff;border-left:1px solid #a0a0a0;border-right:1px solid #a0a0a0;box-sizing:border-box"></div>
<div style="position:absolute;left:615px;top:310px;width:17px;height:16px;background:#f0f0f0;border-right:1px solid #404040;border-bottom:1px solid #404040;box-sizing:border-box;box-shadow:inset -1px -1px 0 #a0a0a0, inset 1px 1px 0 #fff"></div>
<svg style="position:absolute;left:620px;top:316px" width="8" height="5" viewBox="0 0 8 5"><path d="M0 4 H7 L3.5 0 Z" fill="#000"/></svg>
<div style="position:absolute;left:615px;top:376px;width:17px;height:16px;background:#f0f0f0;border-right:1px solid #404040;border-bottom:1px solid #404040;box-sizing:border-box;box-shadow:inset -1px -1px 0 #a0a0a0, inset 1px 1px 0 #fff"></div>
<svg style="position:absolute;left:620px;top:382px" width="8" height="5" viewBox="0 0 8 5"><path d="M0 0 H7 L3.5 4 Z" fill="#000"/></svg>
<div style="position:absolute;left:615px;top:368px;width:17px;height:8px;background:#f0f0f0;border-right:1px solid #404040;border-bottom:1px solid #404040;box-sizing:border-box;box-shadow:inset -1px -1px 0 #a0a0a0, inset 1px 1px 0 #fff"></div>
<div style="position:absolute;left:1px;top:392px;width:638px;height:1px;background:#f0f0f0"></div>
<svg style="position:absolute;left:8px;top:396px" width="13" height="13" viewBox="0 0 13 13"><circle cx="6.5" cy="6.5" r="5.4" fill="#fff" stroke="#a0a0a0" stroke-width="1.1"/><path d="M2.68 10.32 A5.4 5.4 0 0 1 10.32 2.68" fill="none" stroke="#000" stroke-width="1.25"/></svg>
<svg style="position:absolute;left:39px;top:396px" width="13" height="13" viewBox="0 0 13 13"><circle cx="6.5" cy="6.5" r="5.4" fill="#fff" stroke="#a0a0a0" stroke-width="1.1"/><path d="M2.68 10.32 A5.4 5.4 0 0 1 10.32 2.68" fill="none" stroke="#000" stroke-width="1.25"/></svg>
<svg style="position:absolute;left:70px;top:396px" width="13" height="13" viewBox="0 0 13 13"><circle cx="6.5" cy="6.5" r="5.4" fill="#fff" stroke="#a0a0a0" stroke-width="1.1"/><path d="M2.68 10.32 A5.4 5.4 0 0 1 10.32 2.68" fill="none" stroke="#000" stroke-width="1.25"/></svg>
<svg style="position:absolute;left:101px;top:396px" width="13" height="13" viewBox="0 0 13 13"><circle cx="6.5" cy="6.5" r="5.4" fill="#fff" stroke="#a0a0a0" stroke-width="1.1"/><path d="M2.68 10.32 A5.4 5.4 0 0 1 10.32 2.68" fill="none" stroke="#000" stroke-width="1.25"/></svg>
<svg style="position:absolute;left:132px;top:396px" width="13" height="13" viewBox="0 0 13 13"><circle cx="6.5" cy="6.5" r="5.4" fill="#fff" stroke="#a0a0a0" stroke-width="1.1"/><path d="M2.68 10.32 A5.4 5.4 0 0 1 10.32 2.68" fill="none" stroke="#000" stroke-width="1.25"/></svg>
<svg style="position:absolute;left:164px;top:396px" width="13" height="13" viewBox="0 0 13 13"><circle cx="6.5" cy="6.5" r="5.4" fill="#fff" stroke="#a0a0a0" stroke-width="1.1"/><path d="M2.68 10.32 A5.4 5.4 0 0 1 10.32 2.68" fill="none" stroke="#000" stroke-width="1.25"/></svg>
<svg style="position:absolute;left:195px;top:396px" width="13" height="13" viewBox="0 0 13 13"><circle cx="6.5" cy="6.5" r="5.4" fill="#fff" stroke="#a0a0a0" stroke-width="1.1"/><path d="M2.68 10.32 A5.4 5.4 0 0 1 10.32 2.68" fill="none" stroke="#000" stroke-width="1.25"/></svg>
<svg style="position:absolute;left:226px;top:396px" width="13" height="13" viewBox="0 0 13 13"><circle cx="6.5" cy="6.5" r="5.4" fill="#fff" stroke="#a0a0a0" stroke-width="1.1"/><path d="M2.68 10.32 A5.4 5.4 0 0 1 10.32 2.68" fill="none" stroke="#000" stroke-width="1.25"/></svg>
<svg style="position:absolute;left:257px;top:396px" width="13" height="13" viewBox="0 0 13 13"><circle cx="6.5" cy="6.5" r="5.4" fill="#fff" stroke="#a0a0a0" stroke-width="1.1"/><path d="M2.68 10.32 A5.4 5.4 0 0 1 10.32 2.68" fill="none" stroke="#000" stroke-width="1.25"/></svg>
<svg style="position:absolute;left:290px;top:396px" width="13" height="13" viewBox="0 0 13 13"><circle cx="6.5" cy="6.5" r="5.4" fill="#fff" stroke="#a0a0a0" stroke-width="1.1"/><path d="M2.68 10.32 A5.4 5.4 0 0 1 10.32 2.68" fill="none" stroke="#000" stroke-width="1.25"/></svg>
<svg style="position:absolute;left:321px;top:396px" width="13" height="13" viewBox="0 0 13 13"><circle cx="6.5" cy="6.5" r="5.4" fill="#fff" stroke="#a0a0a0" stroke-width="1.1"/><path d="M2.68 10.32 A5.4 5.4 0 0 1 10.32 2.68" fill="none" stroke="#000" stroke-width="1.25"/></svg>
<svg style="position:absolute;left:352px;top:396px" width="13" height="13" viewBox="0 0 13 13"><circle cx="6.5" cy="6.5" r="5.4" fill="#fff" stroke="#a0a0a0" stroke-width="1.1"/><path d="M2.68 10.32 A5.4 5.4 0 0 1 10.32 2.68" fill="none" stroke="#000" stroke-width="1.25"/></svg>
<svg style="position:absolute;left:383px;top:396px" width="13" height="13" viewBox="0 0 13 13"><circle cx="6.5" cy="6.5" r="5.4" fill="#fff" stroke="#a0a0a0" stroke-width="1.1"/><path d="M2.68 10.32 A5.4 5.4 0 0 1 10.32 2.68" fill="none" stroke="#000" stroke-width="1.25"/></svg>
<svg style="position:absolute;left:414px;top:396px" width="13" height="13" viewBox="0 0 13 13"><circle cx="6.5" cy="6.5" r="5.4" fill="#fff" stroke="#a0a0a0" stroke-width="1.1"/><path d="M2.68 10.32 A5.4 5.4 0 0 1 10.32 2.68" fill="none" stroke="#000" stroke-width="1.25"/></svg>
<svg style="position:absolute;left:446px;top:396px" width="13" height="13" viewBox="0 0 13 13"><circle cx="6.5" cy="6.5" r="5.4" fill="#fff" stroke="#a0a0a0" stroke-width="1.1"/><path d="M2.68 10.32 A5.4 5.4 0 0 1 10.32 2.68" fill="none" stroke="#000" stroke-width="1.25"/></svg>
<svg style="position:absolute;left:478px;top:396px" width="13" height="13" viewBox="0 0 13 13"><circle cx="6.5" cy="6.5" r="5.4" fill="#fff" stroke="#a0a0a0" stroke-width="1.1"/><path d="M2.68 10.32 A5.4 5.4 0 0 1 10.32 2.68" fill="none" stroke="#000" stroke-width="1.25"/></svg>
<svg style="position:absolute;left:513px;top:396px" width="13" height="13" viewBox="0 0 13 13"><circle cx="6.5" cy="6.5" r="5.4" fill="#fff" stroke="#a0a0a0" stroke-width="1.1"/><path d="M2.68 10.32 A5.4 5.4 0 0 1 10.32 2.68" fill="none" stroke="#000" stroke-width="1.25"/></svg>
<svg style="position:absolute;left:545px;top:396px" width="13" height="13" viewBox="0 0 13 13"><circle cx="6.5" cy="6.5" r="5.4" fill="#fff" stroke="#a0a0a0" stroke-width="1.1"/><path d="M2.68 10.32 A5.4 5.4 0 0 1 10.32 2.68" fill="none" stroke="#000" stroke-width="1.25"/><rect x="4" y="4" width="5" height="5" rx="1.2" fill="#000"/></svg>
<svg style="position:absolute;left:582px;top:396px" width="13" height="13" viewBox="0 0 13 13"><circle cx="6.5" cy="6.5" r="5.4" fill="#fff" stroke="#a0a0a0" stroke-width="1.1"/><path d="M2.68 10.32 A5.4 5.4 0 0 1 10.32 2.68" fill="none" stroke="#000" stroke-width="1.25"/></svg>
<svg style="position:absolute;left:8px;top:411px" width="13" height="13" viewBox="0 0 13 13"><circle cx="6.5" cy="6.5" r="5.4" fill="#fff" stroke="#a0a0a0" stroke-width="1.1"/><path d="M2.68 10.32 A5.4 5.4 0 0 1 10.32 2.68" fill="none" stroke="#000" stroke-width="1.25"/></svg>
<svg style="position:absolute;left:39px;top:411px" width="13" height="13" viewBox="0 0 13 13"><circle cx="6.5" cy="6.5" r="5.4" fill="#fff" stroke="#a0a0a0" stroke-width="1.1"/><path d="M2.68 10.32 A5.4 5.4 0 0 1 10.32 2.68" fill="none" stroke="#000" stroke-width="1.25"/></svg>
<svg style="position:absolute;left:70px;top:413px" width="13" height="13" viewBox="0 0 13 13"><circle cx="6.5" cy="6.5" r="5.4" fill="#fff" stroke="#a0a0a0" stroke-width="1.1"/><path d="M2.68 10.32 A5.4 5.4 0 0 1 10.32 2.68" fill="none" stroke="#000" stroke-width="1.25"/></svg>
<svg style="position:absolute;left:101px;top:413px" width="13" height="13" viewBox="0 0 13 13"><circle cx="6.5" cy="6.5" r="5.4" fill="#fff" stroke="#a0a0a0" stroke-width="1.1"/><path d="M2.68 10.32 A5.4 5.4 0 0 1 10.32 2.68" fill="none" stroke="#000" stroke-width="1.25"/></svg>
<svg style="position:absolute;left:132px;top:413px" width="13" height="13" viewBox="0 0 13 13"><circle cx="6.5" cy="6.5" r="5.4" fill="#fff" stroke="#a0a0a0" stroke-width="1.1"/><path d="M2.68 10.32 A5.4 5.4 0 0 1 10.32 2.68" fill="none" stroke="#000" stroke-width="1.25"/></svg>
<svg style="position:absolute;left:164px;top:411px" width="13" height="13" viewBox="0 0 13 13"><circle cx="6.5" cy="6.5" r="5.4" fill="#fff" stroke="#a0a0a0" stroke-width="1.1"/><path d="M2.68 10.32 A5.4 5.4 0 0 1 10.32 2.68" fill="none" stroke="#000" stroke-width="1.25"/></svg>
<svg style="position:absolute;left:39px;top:429px" width="13" height="13" viewBox="0 0 13 13"><circle cx="6.5" cy="6.5" r="5.4" fill="#fff" stroke="#a0a0a0" stroke-width="1.1"/><path d="M2.68 10.32 A5.4 5.4 0 0 1 10.32 2.68" fill="none" stroke="#000" stroke-width="1.25"/></svg>
<svg style="position:absolute;left:70px;top:429px" width="13" height="13" viewBox="0 0 13 13"><circle cx="6.5" cy="6.5" r="5.4" fill="#fff" stroke="#a0a0a0" stroke-width="1.1"/><path d="M2.68 10.32 A5.4 5.4 0 0 1 10.32 2.68" fill="none" stroke="#000" stroke-width="1.25"/></svg>
<svg style="position:absolute;left:101px;top:429px" width="13" height="13" viewBox="0 0 13 13"><circle cx="6.5" cy="6.5" r="5.4" fill="#fff" stroke="#a0a0a0" stroke-width="1.1"/><path d="M2.68 10.32 A5.4 5.4 0 0 1 10.32 2.68" fill="none" stroke="#000" stroke-width="1.25"/></svg>
<svg style="position:absolute;left:133px;top:429px" width="13" height="13" viewBox="0 0 13 13"><circle cx="6.5" cy="6.5" r="5.4" fill="#fff" stroke="#a0a0a0" stroke-width="1.1"/><path d="M2.68 10.32 A5.4 5.4 0 0 1 10.32 2.68" fill="none" stroke="#000" stroke-width="1.25"/></svg>
<svg style="position:absolute;left:164px;top:429px" width="13" height="13" viewBox="0 0 13 13"><circle cx="6.5" cy="6.5" r="5.4" fill="#fff" stroke="#a0a0a0" stroke-width="1.1"/><path d="M2.68 10.32 A5.4 5.4 0 0 1 10.32 2.68" fill="none" stroke="#000" stroke-width="1.25"/></svg>
<svg style="position:absolute;left:101px;top:444px" width="13" height="13" viewBox="0 0 13 13"><circle cx="6.5" cy="6.5" r="5.4" fill="#fff" stroke="#a0a0a0" stroke-width="1.1"/><path d="M2.68 10.32 A5.4 5.4 0 0 1 10.32 2.68" fill="none" stroke="#000" stroke-width="1.25"/></svg>
<svg style="position:absolute;left:133px;top:444px" width="13" height="13" viewBox="0 0 13 13"><circle cx="6.5" cy="6.5" r="5.4" fill="#fff" stroke="#a0a0a0" stroke-width="1.1"/><path d="M2.68 10.32 A5.4 5.4 0 0 1 10.32 2.68" fill="none" stroke="#000" stroke-width="1.25"/></svg>
<svg style="position:absolute;left:3px;top:428px" width="32" height="32" viewBox="0 0 32 32" shape-rendering="crispEdges">
<defs>
<pattern id="dc" width="2" height="2" patternUnits="userSpaceOnUse"><rect width="2" height="2" fill="#fff"/><rect width="1" height="1" fill="#0ff"/><rect x="1" y="1" width="1" height="1" fill="#0ff"/></pattern>
<pattern id="dp" width="2" height="2" patternUnits="userSpaceOnUse"><rect width="2" height="2" fill="#fff"/><rect width="1" height="1" fill="#f00"/><rect x="1" y="1" width="1" height="1" fill="#f00"/></pattern>
<pattern id="dk" width="2" height="2" patternUnits="userSpaceOnUse"><rect width="2" height="2" fill="#000"/><rect width="1" height="1" fill="#0ff"/><rect x="1" y="1" width="1" height="1" fill="#0ff"/></pattern>
</defs>
<rect x="0" y="0" width="32" height="32" fill="#000"/><rect x="1" y="1" width="30" height="30" fill="url(#dc)"/>
<rect x="1" y="22" width="30" height="9" fill="url(#dk)"/>
<path d="M1 15 V12 L4 9 L8 6 H9 L10 5.5 H17 L20 6 H27 L29 8 L31 10 V23 H10 L6 21 L3 18 Z" fill="url(#dp)"/>
<path d="M1 17 L5 22 V31 H1 Z" fill="url(#dc)"/>
<path d="M9.5 5.8 H16.5 L13 12.2 Z" fill="none" stroke="#000" stroke-width="1.6" shape-rendering="auto"/>
<path d="M8 7 L3.5 10.5" fill="none" stroke="#000" stroke-width="1.2" shape-rendering="auto"/>
<circle cx="7.5" cy="12.5" r="1.6" fill="#00d0d0" stroke="#000" stroke-width="1.1" shape-rendering="auto"/>
<rect x="1" y="12" width="2" height="4" fill="#f0f"/>
<path d="M3 17.5 L6 19 L10 15" fill="none" stroke="#000" stroke-width="1.3" shape-rendering="auto"/>
<rect x="14" y="10" width="2" height="2" fill="#f0f"/>
<path d="M28 6 L31 2 V6 L29 8 Z" fill="#808040"/>
<rect x="29" y="6" width="1" height="2" fill="#fff"/>
<rect x="6" y="23" width="1" height="1" fill="#ff0"/><rect x="7" y="23" width="1" height="1" fill="#ff0"/><rect x="8" y="23" width="1" height="1" fill="#ff0"/><rect x="5" y="24" width="1" height="1" fill="#ff0"/><rect x="6" y="24" width="1" height="1" fill="#ff0"/><rect x="8" y="24" width="1" height="1" fill="#ff0"/><rect x="9" y="24" width="1" height="1" fill="#ff0"/><rect x="8" y="25" width="1" height="1" fill="#ff0"/><rect x="9" y="25" width="1" height="1" fill="#ff0"/><rect x="7" y="26" width="1" height="1" fill="#ff0"/><rect x="8" y="26" width="1" height="1" fill="#ff0"/><rect x="6" y="27" width="1" height="1" fill="#ff0"/><rect x="7" y="27" width="1" height="1" fill="#ff0"/><rect x="5" y="28" width="1" height="1" fill="#ff0"/><rect x="6" y="28" width="1" height="1" fill="#ff0"/><rect x="5" y="29" width="1" height="1" fill="#ff0"/><rect x="6" y="29" width="1" height="1" fill="#ff0"/><rect x="7" y="29" width="1" height="1" fill="#ff0"/><rect x="8" y="29" width="1" height="1" fill="#ff0"/><rect x="9" y="29" width="1" height="1" fill="#ff0"/><rect x="12" y="23" width="1" height="1" fill="#ff0"/><rect x="13" y="23" width="1" height="1" fill="#ff0"/><rect x="14" y="23" width="1" height="1" fill="#ff0"/><rect x="11" y="24" width="1" height="1" fill="#ff0"/><rect x="12" y="24" width="1" height="1" fill="#ff0"/><rect x="14" y="24" width="1" height="1" fill="#ff0"/><rect x="15" y="24" width="1" height="1" fill="#ff0"/><rect x="11" y="25" width="1" height="1" fill="#ff0"/><rect x="12" y="25" width="1" height="1" fill="#ff0"/><rect x="14" y="25" width="1" height="1" fill="#ff0"/><rect x="15" y="25" width="1" height="1" fill="#ff0"/><rect x="11" y="26" width="1" height="1" fill="#ff0"/><rect x="12" y="26" width="1" height="1" fill="#ff0"/><rect x="14" y="26" width="1" height="1" fill="#ff0"/><rect x="15" y="26" width="1" height="1" fill="#ff0"/><rect x="11" y="27" width="1" height="1" fill="#ff0"/><rect x="12" y="27" width="1" height="1" fill="#ff0"/><rect x="14" y="27" width="1" height="1" fill="#ff0"/><rect x="15" y="27" width="1" height="1" fill="#ff0"/><rect x="11" y="28" width="1" height="1" fill="#ff0"/><rect x="12" y="28" width="1" height="1" fill="#ff0"/><rect x="14" y="28" width="1" height="1" fill="#ff0"/><rect x="15" y="28" width="1" height="1" fill="#ff0"/><rect x="12" y="29" width="1" height="1" fill="#ff0"/><rect x="13" y="29" width="1" height="1" fill="#ff0"/><rect x="14" y="29" width="1" height="1" fill="#ff0"/><rect x="18" y="23" width="1" height="1" fill="#ff0"/><rect x="19" y="23" width="1" height="1" fill="#ff0"/><rect x="20" y="23" width="1" height="1" fill="#ff0"/><rect x="17" y="24" width="1" height="1" fill="#ff0"/><rect x="18" y="24" width="1" height="1" fill="#ff0"/><rect x="20" y="24" width="1" height="1" fill="#ff0"/><rect x="21" y="24" width="1" height="1" fill="#ff0"/><rect x="20" y="25" width="1" height="1" fill="#ff0"/><rect x="21" y="25" width="1" height="1" fill="#ff0"/><rect x="19" y="26" width="1" height="1" fill="#ff0"/><rect x="20" y="26" width="1" height="1" fill="#ff0"/><rect x="18" y="27" width="1" height="1" fill="#ff0"/><rect x="19" y="27" width="1" height="1" fill="#ff0"/><rect x="17" y="28" width="1" height="1" fill="#ff0"/><rect x="18" y="28" width="1" height="1" fill="#ff0"/><rect x="17" y="29" width="1" height="1" fill="#ff0"/><rect x="18" y="29" width="1" height="1" fill="#ff0"/><rect x="19" y="29" width="1" height="1" fill="#ff0"/><rect x="20" y="29" width="1" height="1" fill="#ff0"/><rect x="21" y="29" width="1" height="1" fill="#ff0"/><rect x="24" y="23" width="1" height="1" fill="#ff0"/><rect x="25" y="23" width="1" height="1" fill="#ff0"/><rect x="26" y="23" width="1" height="1" fill="#ff0"/><rect x="23" y="24" width="1" height="1" fill="#ff0"/><rect x="24" y="24" width="1" height="1" fill="#ff0"/><rect x="26" y="24" width="1" height="1" fill="#ff0"/><rect x="27" y="24" width="1" height="1" fill="#ff0"/><rect x="26" y="25" width="1" height="1" fill="#ff0"/><rect x="27" y="25" width="1" height="1" fill="#ff0"/><rect x="25" y="26" width="1" height="1" fill="#ff0"/><rect x="26" y="26" width="1" height="1" fill="#ff0"/><rect x="24" y="27" width="1" height="1" fill="#ff0"/><rect x="25" y="27" width="1" height="1" fill="#ff0"/><rect x="23" y="28" width="1" height="1" fill="#ff0"/><rect x="24" y="28" width="1" height="1" fill="#ff0"/><rect x="23" y="29" width="1" height="1" fill="#ff0"/><rect x="24" y="29" width="1" height="1" fill="#ff0"/><rect x="25" y="29" width="1" height="1" fill="#ff0"/><rect x="26" y="29" width="1" height="1" fill="#ff0"/><rect x="27" y="29" width="1" height="1" fill="#ff0"/></svg>
<div style="position:absolute;left:201px;top:412px;width:356px;height:47px;background:#fff;border:1px solid #000;box-sizing:border-box"></div>
<div style="position:absolute;left:411px;top:415px;width:1px;height:13px;background:#000"></div>
<svg style="position:absolute;left:560px;top:417px" width="12" height="40" viewBox="0 0 12 40"><path d="M1.5 7 L5.5 3 L9.5 7" fill="none" stroke="#c8c8c8" stroke-width="1.5"/><path d="M1.5 32 L5.5 36 L9.5 32" fill="none" stroke="#c8c8c8" stroke-width="1.5"/></svg>
<div style="position:absolute;left:577px;top:423px;width:55px;height:17px;background:#fff;border-top:1px solid #e0e0e0;border-bottom:1px solid #e0e0e0;box-sizing:border-box"></div>
<div style="position:absolute;left:577px;top:423px;width:17px;height:17px;background:#f0f0f0;border-right:1px solid #696969;border-bottom:1px solid #696969;box-sizing:border-box;box-shadow:inset -1px -1px 0 #a0a0a0, inset 1px 1px 0 #fff"></div>
<svg style="position:absolute;left:582px;top:428px" width="5" height="8" viewBox="0 0 5 8"><path d="M4 0 V7 L0 3.5 Z" fill="#000"/></svg>
<div style="position:absolute;left:615px;top:423px;width:17px;height:17px;background:#f0f0f0;border-right:1px solid #696969;border-bottom:1px solid #696969;box-sizing:border-box;box-shadow:inset -1px -1px 0 #a0a0a0, inset 1px 1px 0 #fff"></div>
<svg style="position:absolute;left:620px;top:428px" width="5" height="8" viewBox="0 0 5 8"><path d="M0 0 V7 L4 3.5 Z" fill="#000"/></svg>
<div style="position:absolute;left:593px;top:423px;width:10px;height:17px;background:#fff;border-right:1px solid #a0a0a0;border-top:1px solid #a0a0a0;box-sizing:border-box"></div>
<div style="position:absolute;left:602px;top:423px;width:8px;height:17px;background:#f0f0f0;border-right:1px solid #696969;border-bottom:1px solid #696969;box-sizing:border-box;box-shadow:inset 1px 1px 0 #fff"></div>
<div style="position:absolute;left:610px;top:423px;width:6px;height:17px;background:#fff;border-top:1px solid #a0a0a0;box-sizing:border-box"></div>
<div style="position:absolute;left:577px;top:442px;width:55px;height:15px;background:#fff;border:1px solid #000;border-left-width:2px;border-bottom-width:2px;box-sizing:border-box"></div>
<div style="position:absolute;left:1px;top:461px;width:637px;height:1px;background:#a0a0a0"></div>
<div style="position:absolute;left:1px;top:462px;width:637px;height:1px;background:#fff"></div>
<div style="position:absolute;left:6px;top:466px;width:628px;height:17px;border-top:1px solid #a0a0a0;border-left:1px solid #a0a0a0;border-right:1px solid #fff;border-bottom:1px solid #fff;box-sizing:border-box"></div>
<svg style="position:absolute;left:0;top:0;white-space:pre;will-change:transform" width="640" height="489" font-family="Liberation Sans, sans-serif"><text x="24.53" y="17" font-size="12.3" stroke="#000" stroke-width="0.15" fill="#000" text-anchor="start" textLength="232.56" lengthAdjust="spacingAndGlyphs">HS  Nettoeinkommen Pro 2022 [Neue Datei]</text><text x="7.93" y="40" font-size="12.3" stroke="#000" stroke-width="0.15" fill="#000" text-anchor="start" textLength="27.57" lengthAdjust="spacingAndGlyphs">Datei</text><text x="48.73" y="40" font-size="12.3" stroke="#000" stroke-width="0.15" fill="#000" text-anchor="start" textLength="71.03" lengthAdjust="spacingAndGlyphs">Einstellungen</text><text x="133.01" y="40" font-size="12.3" stroke="#000" stroke-width="0.15" fill="#000" text-anchor="start" textLength="78.36" lengthAdjust="spacingAndGlyphs">Berechnungen</text><text x="223.7" y="40" font-size="12.3" stroke="#000" stroke-width="0.15" fill="#000" text-anchor="start" textLength="48.67" lengthAdjust="spacingAndGlyphs">Kopieren</text><text x="285.29" y="40" font-size="12.3" stroke="#000" stroke-width="0.15" fill="#000" text-anchor="start" textLength="103.95" lengthAdjust="spacingAndGlyphs">Fernsteuerung/DDE</text><text x="403.38" y="40" font-size="12.3" stroke="#000" stroke-width="0.15" fill="#000" text-anchor="start" textLength="39.21" lengthAdjust="spacingAndGlyphs">Ansicht</text><text x="456.43" y="40" font-size="12.3" stroke="#000" stroke-width="0.15" fill="#000" text-anchor="start" textLength="26.15" lengthAdjust="spacingAndGlyphs">Hilfe</text><text x="16.67" y="89" font-size="12.3" font-weight="bold" stroke="#000" stroke-width="0.25" fill="#000" text-anchor="start" textLength="72.73" lengthAdjust="spacingAndGlyphs">Steuerklasse</text><text x="33.6" y="106" font-size="12.3" font-weight="bold" stroke="#000" stroke-width="0.25" fill="#000" text-anchor="start">1</text><text x="77.4" y="106" font-size="12.3" font-weight="bold" stroke="#000" stroke-width="0.25" fill="#000" text-anchor="start">4</text><text x="33.4" y="126" font-size="12.3" font-weight="bold" stroke="#000" stroke-width="0.25" fill="#000" text-anchor="start">2</text><text x="56.2" y="126" font-size="12.3" font-weight="bold" stroke="#5a5a5a" stroke-width="0.25" fill="#5a5a5a" text-anchor="start" textLength="32.11" lengthAdjust="spacingAndGlyphs">1,000</text><text x="33.4" y="146" font-size="12.3" font-weight="bold" stroke="#000" stroke-width="0.25" fill="#000" text-anchor="start">3</text><text x="63.4" y="146" font-size="12.3" font-weight="bold" stroke="#000" stroke-width="0.25" fill="#000" text-anchor="start">5</text><text x="93.4" y="146" font-size="12.3" font-weight="bold" stroke="#000" stroke-width="0.25" fill="#000" text-anchor="start">6</text><text x="115.47" y="89" font-size="12.3" font-weight="bold" stroke="#000" stroke-width="0.25" fill="#000" text-anchor="start" textLength="97.93" lengthAdjust="spacingAndGlyphs">Kinderfreibeträge</text><text x="133.02" y="108" font-size="12.3" stroke="#000" stroke-width="0.15" fill="#000" text-anchor="start" textLength="26.22" lengthAdjust="spacingAndGlyphs">keine</text><text x="182.9" y="108" font-size="12.3" font-weight="bold" stroke="#000" stroke-width="0.25" fill="#000" text-anchor="start" textLength="18.97" lengthAdjust="spacingAndGlyphs">1,5</text><text x="222.8" y="108" font-size="12.3" font-weight="bold" stroke="#000" stroke-width="0.25" fill="#000" text-anchor="start">3</text><text x="257.11" y="108" font-size="12.3" stroke="#000" stroke-width="0.15" fill="#000" text-anchor="start" textLength="23.65" lengthAdjust="spacingAndGlyphs">mehr</text><text x="133.23" y="126" font-size="12.3" font-weight="bold" stroke="#000" stroke-width="0.25" fill="#000" text-anchor="start" textLength="18.37" lengthAdjust="spacingAndGlyphs">0,5</text><text x="183.1" y="126" font-size="12.3" font-weight="bold" stroke="#000" stroke-width="0.25" fill="#000" text-anchor="start">2</text><text x="223.11" y="126" font-size="12.3" font-weight="bold" stroke="#000" stroke-width="0.25" fill="#000" text-anchor="start" textLength="18.50" lengthAdjust="spacingAndGlyphs">3,5</text><text x="133.1" y="144" font-size="12.3" font-weight="bold" stroke="#000" stroke-width="0.25" fill="#000" text-anchor="start">1</text><text x="183.3" y="144" font-size="12.3" font-weight="bold" stroke="#000" stroke-width="0.25" fill="#000" text-anchor="start" textLength="18.57" lengthAdjust="spacingAndGlyphs">2,5</text><text x="222.8" y="144" font-size="12.3" font-weight="bold" stroke="#000" stroke-width="0.25" fill="#000" text-anchor="start">4</text><text x="9.68" y="167" font-size="12.3" font-weight="bold" stroke="#000" stroke-width="0.25" fill="#000" text-anchor="start" textLength="168.83" lengthAdjust="spacingAndGlyphs">Summe Kinder+Betreuungs-FB</text><text x="274" y="167" font-size="12.5" font-weight="bold" stroke="#0000ff" stroke-width="0.05" fill="#0000ff" text-anchor="end">0</text><text x="280.85" y="167" font-size="12.5" font-weight="bold" stroke="#0000ff" stroke-width="0.25" fill="#0000ff" text-anchor="start" textLength="7.38" lengthAdjust="spacingAndGlyphs">€</text><text x="8.93" y="183" font-size="12.3" font-weight="bold" stroke="#000" stroke-width="0.25" fill="#000" text-anchor="start" textLength="108.47" lengthAdjust="spacingAndGlyphs">Vorsorgepauschale</text><text x="274" y="183" font-size="12.5" font-weight="bold" stroke="#000" stroke-width="0.05" fill="#000" text-anchor="end">5193</text><text x="280.85" y="183" font-size="12.5" font-weight="bold" stroke="#000" stroke-width="0.25" fill="#000" text-anchor="start" textLength="7.38" lengthAdjust="spacingAndGlyphs">€</text><text x="9.67" y="199" font-size="12.3" font-weight="bold" stroke="#000" stroke-width="0.25" fill="#000" text-anchor="start" textLength="177.37" lengthAdjust="spacingAndGlyphs">Sonderausgaben-Pauschbetrag</text><text x="274" y="199" font-size="12.5" font-weight="bold" stroke="#000" stroke-width="0.05" fill="#000" text-anchor="end">36</text><text x="280.85" y="199" font-size="12.5" font-weight="bold" stroke="#000" stroke-width="0.25" fill="#000" text-anchor="start" textLength="7.38" lengthAdjust="spacingAndGlyphs">€</text><text x="9.23" y="215" font-size="12.3" font-weight="bold" stroke="#000" stroke-width="0.25" fill="#000" text-anchor="start" textLength="189.81" lengthAdjust="spacingAndGlyphs">"Werbungskosten"-Pauschbetrag</text><text x="274" y="215" font-size="12.5" font-weight="bold" stroke="#000" stroke-width="0.05" fill="#000" text-anchor="end">1200</text><text x="280.85" y="215" font-size="12.5" font-weight="bold" stroke="#000" stroke-width="0.25" fill="#000" text-anchor="start" textLength="7.38" lengthAdjust="spacingAndGlyphs">€</text><text x="9.21" y="231" font-size="12.3" font-weight="bold" stroke="#000" stroke-width="0.25" fill="#000" text-anchor="start" textLength="201.19" lengthAdjust="spacingAndGlyphs">Entlastungsbetr. f. Alleinerziehende</text><text x="274" y="231" font-size="12.5" font-weight="bold" stroke="#000" stroke-width="0.05" fill="#000" text-anchor="end">0</text><text x="280.85" y="231" font-size="12.5" font-weight="bold" stroke="#000" stroke-width="0.25" fill="#000" text-anchor="start" textLength="7.38" lengthAdjust="spacingAndGlyphs">€</text><text x="8.93" y="247" font-size="12.3" font-weight="bold" stroke="#000" stroke-width="0.25" fill="#000" text-anchor="start" textLength="197.84" lengthAdjust="spacingAndGlyphs">Versorgungs-, Altersentlastungs-FB</text><text x="274" y="247" font-size="12.5" font-weight="bold" stroke="#000" stroke-width="0.05" fill="#000" text-anchor="end">0</text><text x="280.85" y="247" font-size="12.5" font-weight="bold" stroke="#000" stroke-width="0.25" fill="#000" text-anchor="start" textLength="7.38" lengthAdjust="spacingAndGlyphs">€</text><text x="9.52" y="263" font-size="12.3" font-weight="bold" stroke="#000" stroke-width="0.25" fill="#000" text-anchor="start" textLength="88.76" lengthAdjust="spacingAndGlyphs">Grundfreibetrag</text><text x="274" y="263" font-size="12.5" font-weight="bold" stroke="#000" stroke-width="0.05" fill="#000" text-anchor="end">10347</text><text x="280.85" y="263" font-size="12.5" font-weight="bold" stroke="#000" stroke-width="0.25" fill="#000" text-anchor="start" textLength="7.38" lengthAdjust="spacingAndGlyphs">€</text><text x="10.04" y="279" font-size="12.3" font-weight="bold" stroke="#000" stroke-width="0.25" fill="#000" text-anchor="start" textLength="188.15" lengthAdjust="spacingAndGlyphs">weiterer eingetragener Freibetrag</text><text x="274" y="279" font-size="12.5" font-weight="bold" stroke="#000" stroke-width="0.05" fill="#000" text-anchor="end">0</text><text x="280.85" y="279" font-size="12.5" font-weight="bold" stroke="#000" stroke-width="0.25" fill="#000" text-anchor="start" textLength="7.38" lengthAdjust="spacingAndGlyphs">€</text><text x="9.67" y="299" font-size="12.3" font-weight="bold" stroke="#0000ff" stroke-width="0.25" fill="#0000ff" text-anchor="start" textLength="129.73" lengthAdjust="spacingAndGlyphs">Summe der Freibeträge</text><text x="274" y="297" font-size="12.5" font-weight="bold" stroke="#000" stroke-width="0.05" fill="#000" text-anchor="end">16776</text><text x="280.84" y="297" font-size="12.5" font-weight="bold" stroke="#000" stroke-width="0.25" fill="#000" text-anchor="start" textLength="7.90" lengthAdjust="spacingAndGlyphs">€</text><text x="9.22" y="317" font-size="12.3" font-weight="bold" stroke="#000" stroke-width="0.25" fill="#000" text-anchor="start" textLength="105.91" lengthAdjust="spacingAndGlyphs">Lohnsteuer relativ:</text><text x="147.95" y="316" font-size="11.6" font-weight="bold" stroke="#000" stroke-width="0.25" fill="#000" text-anchor="start" textLength="41.18" lengthAdjust="spacingAndGlyphs">10,32%</text><text x="9.52" y="333" font-size="12.3" font-weight="bold" stroke="#000" stroke-width="0.25" fill="#000" text-anchor="start" textLength="94.60" lengthAdjust="spacingAndGlyphs">Grenzsteuersatz:</text><text x="101" y="349" font-size="12.3" font-weight="bold" stroke="#000" stroke-width="0.25" fill="#000" text-anchor="middle">23%</text><text x="9.21" y="369" font-size="12.3" font-weight="bold" stroke="#000" stroke-width="0.25" fill="#000" text-anchor="start" textLength="150.69" lengthAdjust="spacingAndGlyphs">Nach Abgaben verbleiben:</text><text x="101" y="387" font-size="12.3" font-weight="bold" stroke="#000" stroke-width="0.25" fill="#000" text-anchor="middle">69%</text><text x="399.07" y="89" font-size="12.3" font-weight="bold" stroke="#000" stroke-width="0.25" fill="#000" text-anchor="start" textLength="41.26" lengthAdjust="spacingAndGlyphs">Tabelle</text><text x="459.67" y="95" font-size="12.3" font-weight="bold" stroke="#000" stroke-width="0.25" fill="#000" text-anchor="start" textLength="59.42" lengthAdjust="spacingAndGlyphs">allgemeine</text><text x="536.94" y="95" font-size="12.3" font-weight="bold" stroke="#000" stroke-width="0.25" fill="#000" text-anchor="start" textLength="59.16" lengthAdjust="spacingAndGlyphs">besondere</text><text x="297.24" y="109" font-size="12.3" font-weight="bold" stroke="#000" stroke-width="0.25" fill="#000" text-anchor="start" textLength="104.48" lengthAdjust="spacingAndGlyphs">Monatseinkommen</text><text x="297.43" y="122" font-size="12.3" font-weight="bold" stroke="#000" stroke-width="0.25" fill="#000" text-anchor="start" textLength="46.49" lengthAdjust="spacingAndGlyphs">(Brutto):</text><text x="297.53" y="139" font-size="12.3" font-weight="bold" stroke="#000" stroke-width="0.25" fill="#000" text-anchor="start" textLength="162.10" lengthAdjust="spacingAndGlyphs">zusätzlich geldwerter Vorteil:</text><text x="297.23" y="161" font-size="12.3" font-weight="bold" stroke="#000" stroke-width="0.25" fill="#000" text-anchor="start" textLength="67.49" lengthAdjust="spacingAndGlyphs">Lohnsteuer:</text><text x="296.87" y="183" font-size="12.3" font-weight="bold" stroke="#000" stroke-width="0.25" fill="#000" text-anchor="start" textLength="117.24" lengthAdjust="spacingAndGlyphs">Solidaritätszuschlag:</text><text x="297.23" y="205" font-size="12.3" font-weight="bold" stroke="#000" stroke-width="0.25" fill="#000" text-anchor="start" textLength="82.39" lengthAdjust="spacingAndGlyphs">Kirchensteuer:</text><text x="297.21" y="227" font-size="12.3" font-weight="bold" stroke="#000" stroke-width="0.25" fill="#000" text-anchor="start" textLength="128.93" lengthAdjust="spacingAndGlyphs">Pauschalierte Steuern:</text><text x="297.21" y="249" font-size="12.3" font-weight="bold" stroke="#000" stroke-width="0.25" fill="#000" text-anchor="start" textLength="60.94" lengthAdjust="spacingAndGlyphs">Krankenv.:</text><text x="297.22" y="271" font-size="12.3" font-weight="bold" stroke="#000" stroke-width="0.25" fill="#000" text-anchor="start" textLength="117.92" lengthAdjust="spacingAndGlyphs">Rentenversicherung:</text><text x="296.72" y="295" font-size="12.3" font-weight="bold" stroke="#000" stroke-width="0.25" fill="#000" text-anchor="start" textLength="146.19" lengthAdjust="spacingAndGlyphs">Arbeitslosenversicherung:</text><text x="297.21" y="317" font-size="12.3" font-weight="bold" stroke="#000" stroke-width="0.25" fill="#000" text-anchor="start" textLength="67.74" lengthAdjust="spacingAndGlyphs">Pflegevers.:</text><text x="296.93" y="337" font-size="12.3" font-weight="bold" stroke="#000" stroke-width="0.25" fill="#000" text-anchor="start" textLength="184.18" lengthAdjust="spacingAndGlyphs">Vermögenswirksame Leistungen:</text><text x="296.59" y="364" font-size="12.3" font-weight="bold" stroke="#000" stroke-width="0.25" fill="#000" text-anchor="start" textLength="145.35" lengthAdjust="spacingAndGlyphs">sonstige Be- und Abzüge:</text><text x="591" y="120" font-size="15.6" font-weight="bold" stroke="#0000ff" stroke-width="0.25" fill="#0000ff" text-anchor="end">2.500,00</text><text x="599.33" y="120" font-size="15.6" font-weight="bold" stroke="#0000ff" stroke-width="0.25" fill="#0000ff" text-anchor="start" textLength="9.67" lengthAdjust="spacingAndGlyphs">€</text><text x="591" y="142" font-size="15.6" font-weight="bold" stroke="#0000ff" stroke-width="0.25" fill="#0000ff" text-anchor="end">0,00</text><text x="599.33" y="142" font-size="15.6" font-weight="bold" stroke="#0000ff" stroke-width="0.25" fill="#0000ff" text-anchor="start" textLength="9.67" lengthAdjust="spacingAndGlyphs">€</text><text x="591" y="164" font-size="15.6" font-weight="bold" stroke="#ff0000" stroke-width="0.25" fill="#ff0000" text-anchor="end">257,91</text><text x="599.33" y="164" font-size="15.6" font-weight="bold" stroke="#ff0000" stroke-width="0.25" fill="#ff0000" text-anchor="start" textLength="9.67" lengthAdjust="spacingAndGlyphs">€</text><text x="591" y="186" font-size="15.6" font-weight="bold" stroke="#ff0000" stroke-width="0.25" fill="#ff0000" text-anchor="end">0,00</text><text x="599.33" y="186" font-size="15.6" font-weight="bold" stroke="#ff0000" stroke-width="0.25" fill="#ff0000" text-anchor="start" textLength="9.67" lengthAdjust="spacingAndGlyphs">€</text><text x="591" y="208" font-size="15.6" font-weight="bold" stroke="#ff0000" stroke-width="0.25" fill="#ff0000" text-anchor="end">0,00</text><text x="599.33" y="208" font-size="15.6" font-weight="bold" stroke="#ff0000" stroke-width="0.25" fill="#ff0000" text-anchor="start" textLength="9.67" lengthAdjust="spacingAndGlyphs">€</text><text x="591" y="230" font-size="15.6" font-weight="bold" stroke="#ff0000" stroke-width="0.25" fill="#ff0000" text-anchor="end">0,00</text><text x="599.33" y="230" font-size="15.6" font-weight="bold" stroke="#ff0000" stroke-width="0.25" fill="#ff0000" text-anchor="start" textLength="9.67" lengthAdjust="spacingAndGlyphs">€</text><text x="591" y="252" font-size="15.6" font-weight="bold" stroke="#ff0000" stroke-width="0.25" fill="#ff0000" text-anchor="end">197,50</text><text x="599.33" y="252" font-size="15.6" font-weight="bold" stroke="#ff0000" stroke-width="0.25" fill="#ff0000" text-anchor="start" textLength="9.67" lengthAdjust="spacingAndGlyphs">€</text><text x="591" y="274" font-size="15.6" font-weight="bold" stroke="#ff0000" stroke-width="0.25" fill="#ff0000" text-anchor="end">232,50</text><text x="599.33" y="274" font-size="15.6" font-weight="bold" stroke="#ff0000" stroke-width="0.25" fill="#ff0000" text-anchor="start" textLength="9.67" lengthAdjust="spacingAndGlyphs">€</text><text x="591" y="296" font-size="15.6" font-weight="bold" stroke="#ff0000" stroke-width="0.25" fill="#ff0000" text-anchor="end">30,00</text><text x="599.33" y="296" font-size="15.6" font-weight="bold" stroke="#ff0000" stroke-width="0.25" fill="#ff0000" text-anchor="start" textLength="9.67" lengthAdjust="spacingAndGlyphs">€</text><text x="591" y="318" font-size="15.6" font-weight="bold" stroke="#ff0000" stroke-width="0.25" fill="#ff0000" text-anchor="end">38,13</text><text x="599.33" y="318" font-size="15.6" font-weight="bold" stroke="#ff0000" stroke-width="0.25" fill="#ff0000" text-anchor="start" textLength="9.67" lengthAdjust="spacingAndGlyphs">€</text><text x="591" y="340" font-size="15.6" font-weight="bold" stroke="#008000" stroke-width="0.25" fill="#008000" text-anchor="end">0,00</text><text x="599.33" y="340" font-size="15.6" font-weight="bold" stroke="#008000" stroke-width="0.25" fill="#008000" text-anchor="start" textLength="9.67" lengthAdjust="spacingAndGlyphs">€</text><text x="591" y="364" font-size="15.6" font-weight="bold" stroke="#008000" stroke-width="0.25" fill="#008000" text-anchor="end">0,00</text><text x="599.33" y="364" font-size="15.6" font-weight="bold" stroke="#008000" stroke-width="0.25" fill="#008000" text-anchor="start" textLength="9.67" lengthAdjust="spacingAndGlyphs">€</text><text x="591" y="386" font-size="15.6" font-weight="bold" stroke="#0000ff" stroke-width="0.25" fill="#0000ff" text-anchor="end">1.743,96</text><text x="599.33" y="386" font-size="15.6" font-weight="bold" stroke="#0000ff" stroke-width="0.25" fill="#0000ff" text-anchor="start" textLength="9.67" lengthAdjust="spacingAndGlyphs">€</text><text x="360.14" y="250" font-size="12.3" stroke="#000" stroke-width="0.15" fill="#000" text-anchor="start" textLength="34.26" lengthAdjust="spacingAndGlyphs">14.6%+</text><text x="398.05" y="250" font-size="12.3" stroke="#000" stroke-width="0.15" fill="#000" text-anchor="start" textLength="15.62" lengthAdjust="spacingAndGlyphs">1,2</text><text x="393.1" y="319" font-size="11.6" stroke="#000" stroke-width="0.15" fill="#000" text-anchor="start" textLength="35.88" lengthAdjust="spacingAndGlyphs">+0.35%</text><text x="344.92" y="348" font-size="9.3" fill="#44547a" text-anchor="start" textLength="122.67" lengthAdjust="spacingAndGlyphs">(bei Abgaben nicht enthalten)</text><text x="307.78" y="384" font-size="12.3" stroke="#000" stroke-width="0.15" fill="#000" text-anchor="start" textLength="54.59" lengthAdjust="spacingAndGlyphs">Arbeitgeber</text><text x="417.22" y="384" font-size="12.3" font-weight="bold" stroke="#000" stroke-width="0.25" fill="#000" text-anchor="start" textLength="69.48" lengthAdjust="spacingAndGlyphs">Auszahlung:</text><text x="620.74" y="115" font-size="12.3" font-weight="bold" stroke="#000" stroke-width="0.25" fill="#000" text-anchor="start" textLength="7.69" lengthAdjust="spacingAndGlyphs">€</text><text x="619.29" y="305" font-size="12.3" font-weight="bold" stroke="#000" stroke-width="0.25" fill="#000" text-anchor="start" textLength="7.29" lengthAdjust="spacingAndGlyphs">c</text><text x="24.2" y="407" font-size="12.2" stroke="#000" stroke-width="0.15" fill="#000" text-anchor="start" textLength="13.4" lengthAdjust="spacingAndGlyphs">05</text><text x="55.7" y="407" font-size="12.2" stroke="#000" stroke-width="0.15" fill="#000" text-anchor="start" textLength="13.4" lengthAdjust="spacingAndGlyphs">06</text><text x="86.7" y="407" font-size="12.2" stroke="#000" stroke-width="0.15" fill="#000" text-anchor="start" textLength="13.4" lengthAdjust="spacingAndGlyphs">07</text><text x="117.8" y="407" font-size="12.2" stroke="#000" stroke-width="0.15" fill="#000" text-anchor="start" textLength="13.4" lengthAdjust="spacingAndGlyphs">08</text><text x="149.0" y="407" font-size="12.2" stroke="#000" stroke-width="0.15" fill="#000" text-anchor="start" textLength="13.4" lengthAdjust="spacingAndGlyphs">09</text><text x="180.2" y="407" font-size="12.2" stroke="#000" stroke-width="0.15" fill="#000" text-anchor="start" textLength="13.4" lengthAdjust="spacingAndGlyphs">10</text><text x="211.39999999999998" y="407" font-size="12.2" stroke="#000" stroke-width="0.15" fill="#000" text-anchor="start" textLength="13.4" lengthAdjust="spacingAndGlyphs">11</text><text x="242.6" y="407" font-size="12.2" stroke="#000" stroke-width="0.15" fill="#000" text-anchor="start" textLength="13.4" lengthAdjust="spacingAndGlyphs">12</text><text x="273.8" y="407" font-size="12.2" stroke="#000" stroke-width="0.15" fill="#000" text-anchor="start" textLength="13.4" lengthAdjust="spacingAndGlyphs">13</text><text x="307.09999999999997" y="407" font-size="12.2" stroke="#000" stroke-width="0.15" fill="#000" text-anchor="start" textLength="13.4" lengthAdjust="spacingAndGlyphs">14</text><text x="338.0" y="407" font-size="12.2" stroke="#000" stroke-width="0.15" fill="#000" text-anchor="start" textLength="13.4" lengthAdjust="spacingAndGlyphs">15</text><text x="368.9" y="407" font-size="12.2" stroke="#000" stroke-width="0.15" fill="#000" text-anchor="start" textLength="13.4" lengthAdjust="spacingAndGlyphs">16</text><text x="399.8" y="407" font-size="12.2" stroke="#000" stroke-width="0.15" fill="#000" text-anchor="start" textLength="13.4" lengthAdjust="spacingAndGlyphs">17</text><text x="430.59999999999997" y="407" font-size="12.2" stroke="#000" stroke-width="0.15" fill="#000" text-anchor="start" textLength="13.4" lengthAdjust="spacingAndGlyphs">18</text><text x="462.5" y="407" font-size="12.2" stroke="#000" stroke-width="0.15" fill="#000" text-anchor="start" textLength="13.4" lengthAdjust="spacingAndGlyphs">19</text><text x="494.59999999999997" y="407" font-size="12.2" stroke="#000" stroke-width="0.15" fill="#000" text-anchor="start" textLength="13.4" lengthAdjust="spacingAndGlyphs">20</text><text x="529.7" y="407" font-size="12.2" stroke="#000" stroke-width="0.15" fill="#000" text-anchor="start" textLength="13.4" lengthAdjust="spacingAndGlyphs">21</text><text x="561.3000000000001" y="407" font-size="12.2" stroke="#ff0000" stroke-width="0.15" fill="#ff0000" text-anchor="start" textLength="13.4" lengthAdjust="spacingAndGlyphs">22</text><text x="599.1" y="407" font-size="12.2" stroke="#000" stroke-width="0.15" fill="#000" text-anchor="start" textLength="13.4" lengthAdjust="spacingAndGlyphs">23</text><text x="24.2" y="422" font-size="12.2" stroke="#000" stroke-width="0.15" fill="#000" text-anchor="start" textLength="13.4" lengthAdjust="spacingAndGlyphs">04</text><text x="55.5" y="422" font-size="12.2" stroke="#000" stroke-width="0.15" fill="#000" text-anchor="start" textLength="13.4" lengthAdjust="spacingAndGlyphs">03</text><text x="86.7" y="424" font-size="12.2" stroke="#000" stroke-width="0.15" fill="#000" text-anchor="start" textLength="13.4" lengthAdjust="spacingAndGlyphs">02</text><text x="118.0" y="424" font-size="12.2" stroke="#000" stroke-width="0.15" fill="#000" text-anchor="start" textLength="13.4" lengthAdjust="spacingAndGlyphs">01</text><text x="149.2" y="424" font-size="12.2" stroke="#000" stroke-width="0.15" fill="#000" text-anchor="start" textLength="13.4" lengthAdjust="spacingAndGlyphs">00</text><text x="180.5" y="422" font-size="12.2" stroke="#000" stroke-width="0.15" fill="#000" text-anchor="start" textLength="13.4" lengthAdjust="spacingAndGlyphs">99</text><text x="55.7" y="440" font-size="12.2" stroke="#000" stroke-width="0.15" fill="#000" text-anchor="start" textLength="13.4" lengthAdjust="spacingAndGlyphs">94</text><text x="86.7" y="440" font-size="12.2" stroke="#000" stroke-width="0.15" fill="#000" text-anchor="start" textLength="13.4" lengthAdjust="spacingAndGlyphs">95</text><text x="117.9" y="440" font-size="12.2" stroke="#000" stroke-width="0.15" fill="#000" text-anchor="start" textLength="13.4" lengthAdjust="spacingAndGlyphs">96</text><text x="149.5" y="440" font-size="12.2" stroke="#000" stroke-width="0.15" fill="#000" text-anchor="start" textLength="13.4" lengthAdjust="spacingAndGlyphs">97</text><text x="180.6" y="440" font-size="12.2" stroke="#000" stroke-width="0.15" fill="#000" text-anchor="start" textLength="13.4" lengthAdjust="spacingAndGlyphs">98</text><text x="117.9" y="455" font-size="12.2" stroke="#000" stroke-width="0.15" fill="#000" text-anchor="start" textLength="13.4" lengthAdjust="spacingAndGlyphs">92</text><text x="149.6" y="455" font-size="12.2" stroke="#000" stroke-width="0.15" fill="#000" text-anchor="start" textLength="13.4" lengthAdjust="spacingAndGlyphs">93</text><text x="45.12" y="455" font-size="12.3" font-weight="bold" stroke="#000" stroke-width="0.25" fill="#000" text-anchor="start" textLength="44.59" lengthAdjust="spacingAndGlyphs">V 30.12</text><text x="168.76" y="455" font-size="12.3" font-weight="bold" stroke="#000" stroke-width="0.25" fill="#000" text-anchor="start" textLength="28.73" lengthAdjust="spacingAndGlyphs">Text:</text><text x="202.24" y="426" font-size="12.2" font-family="Liberation Mono" fill="#000" text-anchor="start" textLength="209.53" lengthAdjust="spacingAndGlyphs">Normales laufendes Brutto.</text><text x="576.91" y="419" font-size="12.3" font-weight="bold" stroke="#000" stroke-width="0.25" fill="#000" text-anchor="start" textLength="37.65" lengthAdjust="spacingAndGlyphs">Monat</text><text x="584.21" y="454" font-size="12.3" font-weight="bold" stroke="#000" stroke-width="0.25" fill="#000" text-anchor="start" textLength="39.28" lengthAdjust="spacingAndGlyphs">8-2022</text></svg>
</body></html>
